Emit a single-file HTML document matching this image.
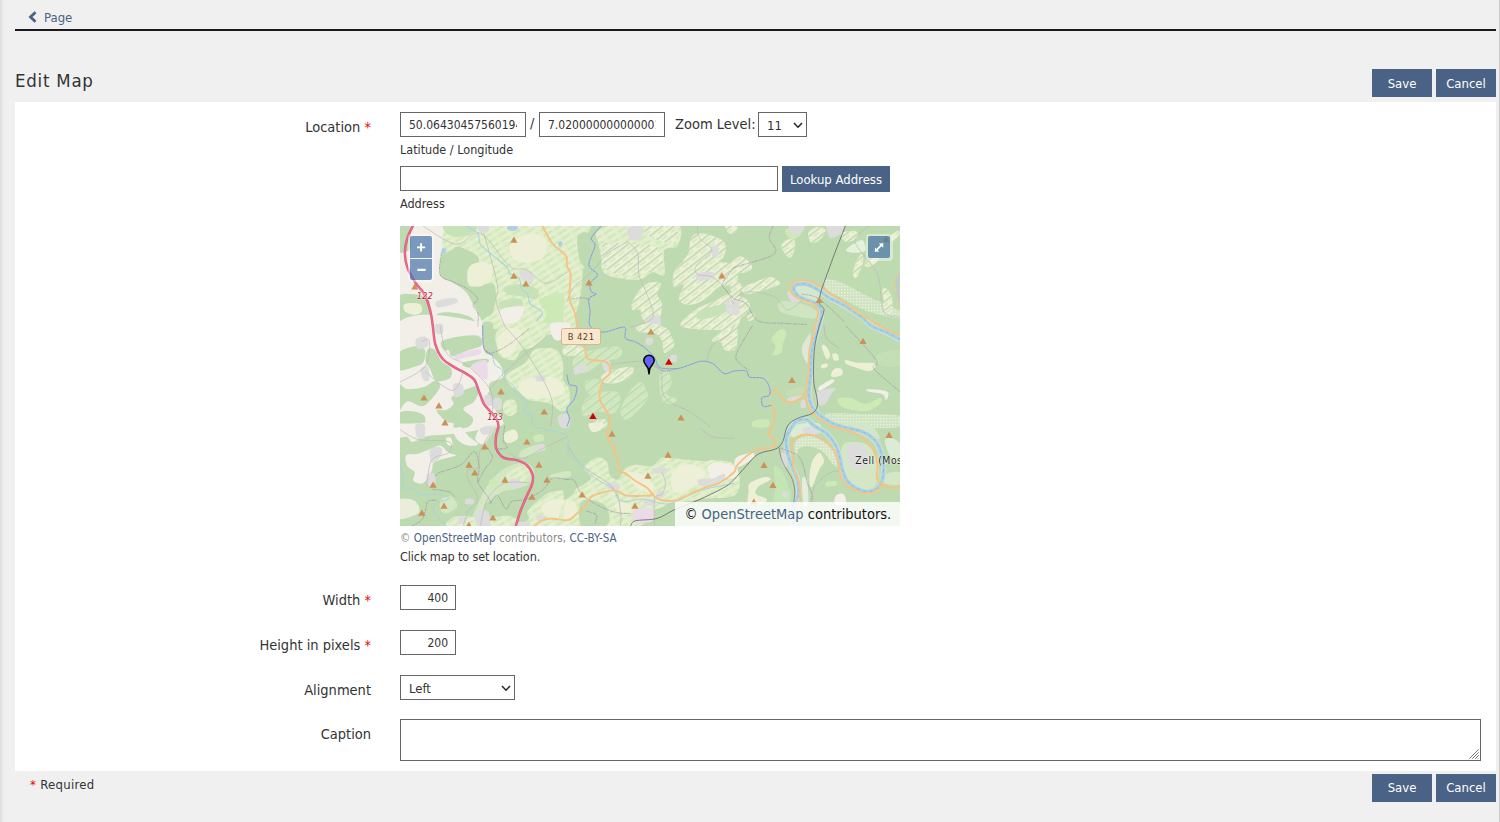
<!DOCTYPE html>
<html><head><meta charset="utf-8"><title>Edit Map</title>
<style>
*{box-sizing:border-box}
html,body{margin:0;padding:0}
body{width:1500px;height:822px;overflow:hidden;background:#f0f0f0;font-family:"DejaVu Sans Condensed","Liberation Sans",sans-serif;color:#333;position:relative;font-size:14px}
.abs{position:absolute}
.edgeL{left:0;top:0;width:4px;height:822px;background:linear-gradient(90deg,#dcdcdc,#f0f0f0)}
.edgeR{left:1499px;top:0;width:1px;height:822px;background:#cdcdcd}
.rule{left:15px;top:29px;width:1481px;height:2px;background:#1a1a1a}
.back{left:44px;top:9px;font-size:13px;color:#4a6285;line-height:18px}
.h1{left:15px;top:67px;font-size:18.5px;letter-spacing:.75px;line-height:28px;color:#333}
.panel{left:15px;top:102px;width:1481px;height:669px;background:#fff}
.btn{background:#4a6285;color:#fff;font-size:13px;text-align:center;height:28px;line-height:30px;width:60px}
.lbl{font-size:14.5px;line-height:20px;text-align:right;width:360px;left:11px;color:#333}
.red{color:#e00}
.inp{border:1px solid #666;background:#fff;height:25px;font-size:12px;line-height:23px;padding:1px 8px 0;overflow:hidden;white-space:nowrap;color:#333}
.sel{font-size:13px}
.chev{position:absolute;right:3.5px;top:9.4px}
.clip{display:block;overflow:hidden;width:108px}
.shield{background:#f9e6cf;border:1px solid #d6b88e;border-radius:2.5px;font-size:9.4px;letter-spacing:.45px;line-height:15.6px;text-align:center;color:#5a4520}
.rlab{font-size:9.3px;font-style:italic;color:#b0182e;line-height:12px;text-shadow:0 0 1.2px #fff,0 0 1.2px #fff,0 0 1.2px #fff}
.zbtn{width:22px;height:22px;background:rgba(0,60,136,.5);overflow:hidden}
.hint{font-size:12.5px;line-height:16px;color:#333}
</style></head><body>
<div class="abs edgeL"></div><div class="abs edgeR"></div>
<svg class="abs" style="left:28px;top:11px" width="10" height="12" viewBox="0 0 10 12"><path d="M7.5 1.2 L2.5 6 L7.5 10.8" fill="none" stroke="#4a6285" stroke-width="2.8"/></svg>
<div class="abs back">Page</div>
<div class="abs rule"></div>
<div class="abs h1">Edit Map</div>
<div class="abs btn" style="left:1372px;top:69px">Save</div>
<div class="abs btn" style="left:1436px;top:69px">Cancel</div>
<div class="abs panel"></div>

<div class="abs lbl" style="top:117px">Location <span class="red">*</span></div>
<div class="abs inp" style="left:400px;top:112px;width:126px"><span class="clip">50.064304575601944</span></div>
<div class="abs" style="left:530px;top:113px;font-size:14.5px;line-height:20px">/</div>
<div class="abs inp" style="left:539px;top:112px;width:126px"><span class="clip">7.020000000000001</span></div>
<div class="abs" style="left:675px;top:114px;font-size:14.5px;line-height:20px">Zoom Level:</div>
<div class="abs inp sel" style="left:758px;top:112px;width:49px">11<svg class="chev" width="10" height="7" viewBox="0 0 10 7"><path d="M1 1l4 4.200 4-4.200" fill="none" stroke="#222" stroke-width="1.500"/></svg></div>
<div class="abs hint" style="left:400px;top:142px">Latitude / Longitude</div>
<div class="abs inp" style="left:400px;top:166px;width:378px"></div>
<div class="abs btn" style="left:782px;top:166px;width:108px;height:26px;line-height:28px">Lookup Address</div>
<div class="abs hint" style="left:400px;top:196px">Address</div>

<div class="abs" id="map" style="left:400px;top:226px;width:500px;height:300px;background:#bddab1;overflow:hidden">
<svg class="abs" style="left:0;top:0" width="500" height="300" viewBox="0 0 500 300">
<rect width="500" height="300" fill="#bddab1"/>
<defs><pattern id="sF" width="11" height="7" patternUnits="userSpaceOnUse" patternTransform="rotate(-38)"><rect y="0" width="11" height="1.6" fill="#bddab1"/><rect y="3.4" width="7" height="1.1" fill="#c9e3b8"/></pattern><pattern id="sM" width="13" height="6" patternUnits="userSpaceOnUse" patternTransform="rotate(-32)"><rect y="0" width="9" height="1.7" fill="#cde9b6"/><rect x="4" y="3.2" width="9" height="1.1" fill="#eef0d5"/></pattern><pattern id="sV" width="3" height="3" patternUnits="userSpaceOnUse"><rect width="1.2" height="1.2" fill="#f2efe9"/></pattern></defs>
<path d="M41.4 -2.4 C62.4 -4.9 147.8 -19.7 169.1 -2.4 C190.4 14.8 183.5 83.7 169.1 101.0 C154.7 118.2 96.7 102.4 82.7 101.0 C68.7 99.6 83.5 94.7 85.2 92.5 C86.8 90.2 90.8 90.0 92.5 87.6 C94.1 85.2 94.3 81.1 94.9 77.9 C95.5 74.6 96.5 71.6 96.1 68.1 C95.7 64.7 95.5 58.4 92.5 57.2 C89.4 56.0 81.9 60.6 77.9 60.8 C73.8 61.0 69.7 61.4 68.1 58.4 C66.5 55.4 66.5 46.2 68.1 42.6 C69.7 38.9 76.2 38.5 77.9 36.5 C79.5 34.5 79.5 32.4 77.9 30.4 C76.2 28.4 71.6 26.0 68.1 24.3 C64.7 22.7 60.0 20.7 57.2 20.7 C54.3 20.7 53.7 23.1 51.1 24.3 C48.5 25.5 42.8 30.0 41.4 28.0 C39.9 26.0 42.6 17.2 42.6 12.2 C42.6 7.1 20.3 0.0 41.4 -2.4Z" fill="#dfedca" />
<path d="M41.4 -2.4 C62.4 -4.9 147.8 -19.7 169.1 -2.4 C190.4 14.8 183.5 83.7 169.1 101.0 C154.7 118.2 96.7 102.4 82.7 101.0 C68.7 99.6 83.5 94.7 85.2 92.5 C86.8 90.2 90.8 90.0 92.5 87.6 C94.1 85.2 94.3 81.1 94.9 77.9 C95.5 74.6 96.5 71.6 96.1 68.1 C95.7 64.7 95.5 58.4 92.5 57.2 C89.4 56.0 81.9 60.6 77.9 60.8 C73.8 61.0 69.7 61.4 68.1 58.4 C66.5 55.4 66.5 46.2 68.1 42.6 C69.7 38.9 76.2 38.5 77.9 36.5 C79.5 34.5 79.5 32.4 77.9 30.4 C76.2 28.4 71.6 26.0 68.1 24.3 C64.7 22.7 60.0 20.7 57.2 20.7 C54.3 20.7 53.7 23.1 51.1 24.3 C48.5 25.5 42.8 30.0 41.4 28.0 C39.9 26.0 42.6 17.2 42.6 12.2 C42.6 7.1 20.3 0.0 41.4 -2.4Z" fill="url(#sM)"/>
<path d="M-2.4 24.3 C-0.4 11.6 7.5 27.8 9.7 24.3 C12.0 20.9 9.9 8.1 10.9 3.6 C12.0 -0.8 10.7 -1.4 15.8 -2.4 C20.9 -3.4 36.9 -4.9 41.4 -2.4 C45.8 0.0 42.6 7.1 42.6 12.2 C42.6 17.2 41.9 23.3 41.4 28.0 C40.9 32.6 39.5 36.3 39.5 40.1 C39.5 44.0 39.0 48.3 41.4 51.1 C43.7 53.9 49.5 54.7 53.5 57.2 C57.6 59.6 62.4 62.2 65.7 65.7 C68.9 69.1 71.0 74.2 73.0 77.9 C75.0 81.5 77.5 83.7 77.9 87.6 C78.3 91.4 88.8 98.7 75.4 101.0 C62.0 103.2 10.5 113.7 -2.4 101.0 C-15.4 88.2 -4.5 37.1 -2.4 24.3Z" fill="#f2efe9" />
<path d="M-2.4 4.9 C-1.2 1.0 2.7 2.0 4.9 2.4 C7.0 2.8 9.5 3.9 10.3 7.3 C11.2 10.7 11.9 20.1 9.7 23.1 C7.6 26.2 -0.4 28.6 -2.4 25.5 C-4.5 22.5 -3.6 8.7 -2.4 4.9Z" fill="#bddab1" />
<path d="M-2.4 71.8 C0.2 66.3 8.3 67.9 13.4 68.1 C18.5 68.3 25.1 70.2 28.0 73.0 C30.8 75.8 29.2 80.5 30.4 85.2 C31.6 89.8 40.8 98.3 35.3 101.0 C29.8 103.6 3.9 105.8 -2.4 101.0 C-8.7 96.1 -5.1 77.3 -2.4 71.8Z" fill="#bddab1" />
<path d="M4.9 77.9 C7.3 76.6 16.6 76.6 19.5 77.9 C22.3 79.1 22.7 83.3 21.9 85.2 C21.1 87.0 17.4 88.8 14.6 88.8 C11.8 88.8 6.5 87.0 4.9 85.2 C3.2 83.3 2.4 79.1 4.9 77.9Z" fill="#edf0d6" />
<path d="M36.5 88.8 C38.9 86.4 45.8 86.2 51.1 86.4 C56.4 86.6 64.1 88.4 68.1 90.0 C72.2 91.6 74.2 94.3 75.4 96.1 C76.6 97.9 81.9 100.2 75.4 101.0 C68.9 101.8 43.0 103.0 36.5 101.0 C30.0 98.9 34.1 91.2 36.5 88.8Z" fill="#bddab1" />
<path d="M69.3 41.4 C70.9 37.9 75.2 37.3 77.9 36.5 C80.5 35.7 82.7 35.7 85.2 36.5 C87.6 37.3 91.6 38.5 92.5 41.4 C93.3 44.2 92.5 50.5 90.0 53.5 C87.6 56.6 81.4 59.0 77.9 59.6 C74.3 60.2 70.2 60.2 68.7 57.2 C67.3 54.1 67.8 44.8 69.3 41.4Z" fill="#edf0d6" />
<path d="M109.5 21.9 C109.9 18.2 112.7 14.6 116.8 12.2 C120.8 9.7 129.0 6.9 133.8 7.3 C138.7 7.7 144.4 10.7 146.0 14.6 C147.6 18.5 146.6 26.8 143.6 30.4 C140.5 34.1 132.6 35.9 127.7 36.5 C122.9 37.1 117.4 36.5 114.4 34.1 C111.3 31.6 109.1 25.5 109.5 21.9Z" fill="#edf0d6" />
<path d="M45.0 -2.4 C49.9 -4.1 70.8 -4.1 75.4 -2.4 C80.1 -0.8 75.8 5.1 73.0 7.3 C70.2 9.5 62.9 10.9 58.4 10.9 C53.9 10.9 48.5 9.5 46.2 7.3 C44.0 5.1 40.1 -0.8 45.0 -2.4Z" fill="#c8e2b8" />
<path d="M104.6 60.8 C107.1 59.2 116.2 58.0 121.7 58.4 C127.1 58.8 135.0 60.8 137.5 63.3 C139.9 65.7 138.9 71.8 136.3 73.0 C133.6 74.2 126.5 71.4 121.7 70.6 C116.8 69.7 109.9 69.7 107.1 68.1 C104.2 66.5 102.2 62.4 104.6 60.8Z" fill="#c8e2b8" />
<path d="M99.8 75.4 C103.0 73.6 116.8 71.8 120.4 73.0 C124.1 74.2 123.5 80.7 121.7 82.7 C119.8 84.8 112.9 85.0 109.5 85.2 C106.0 85.4 102.6 85.6 101.0 83.9 C99.4 82.3 96.5 77.3 99.8 75.4Z" fill="#c8e2b8" />
<path d="M139.9 73.0 C143.8 69.7 164.2 63.5 169.1 68.1 C174.0 72.8 173.4 95.5 169.1 101.0 C164.8 106.4 147.4 103.2 143.6 101.0 C139.7 98.7 146.6 92.3 146.0 87.6 C145.4 82.9 136.1 76.2 139.9 73.0Z" fill="#cde9b6" />
<path d="M101.0 83.9 C104.2 81.3 118.0 79.7 121.7 80.3 C125.3 80.9 124.1 84.8 122.9 87.6 C121.7 90.4 117.8 95.9 114.4 97.3 C110.9 98.7 104.4 98.3 102.2 96.1 C100.0 93.9 97.7 86.6 101.0 83.9Z" fill="#f2efe9" />
<path d="M119.2 45.0 C120.8 44.0 129.2 44.2 131.4 46.2 C133.6 48.3 133.4 55.2 132.6 57.2 C131.8 59.2 128.3 59.2 126.5 58.4 C124.7 57.6 122.9 54.5 121.7 52.3 C120.4 50.1 117.6 46.0 119.2 45.0Z" fill="#dddcdc" />
<path d="M36.5 75.4 C38.9 73.8 50.1 71.6 53.5 71.8 C57.0 72.0 59.6 75.0 57.2 76.6 C54.7 78.3 42.4 81.7 38.9 81.5 C35.5 81.3 34.1 77.0 36.5 75.4Z" fill="#dddcdc" />
<path d="M77.9 -2.4 C79.3 -3.6 86.0 -3.9 87.6 -2.4 C89.2 -1.0 89.0 4.9 87.6 6.1 C86.2 7.3 80.7 6.3 79.1 4.9 C77.5 3.4 76.4 -1.2 77.9 -2.4Z" fill="#dddcdc" />
<ellipse cx="112.5" cy="1.8" rx="5.5" ry="3.0" fill="#aad3df"/>
<ellipse cx="43.8" cy="24.9" rx="2.4" ry="3.0" fill="#aad3df"/>
<ellipse cx="160.6" cy="17.9" rx="2.4" ry="2.7" fill="#aad3df"/>
<path d="M164.6 -2.4 C168.8 -15.0 186.7 -4.9 190.1 -2.4 C193.6 0.0 187.1 7.7 185.2 12.2 C183.4 16.6 179.2 20.3 179.2 24.3 C179.2 28.4 185.0 32.4 185.2 36.5 C185.5 40.6 182.8 43.4 180.4 48.7 C177.9 53.9 173.3 64.1 170.6 68.1 C168.0 72.2 165.6 84.8 164.6 73.0 C163.6 61.2 160.3 10.1 164.6 -2.4Z" fill="#dfedca" />
<path d="M164.6 -2.4 C168.8 -15.0 186.7 -4.9 190.1 -2.4 C193.6 0.0 187.1 7.7 185.2 12.2 C183.4 16.6 179.2 20.3 179.2 24.3 C179.2 28.4 185.0 32.4 185.2 36.5 C185.5 40.6 182.8 43.4 180.4 48.7 C177.9 53.9 173.3 64.1 170.6 68.1 C168.0 72.2 165.6 84.8 164.6 73.0 C163.6 61.2 160.3 10.1 164.6 -2.4Z" fill="url(#sM)"/>
<path d="M177.9 9.7 C179.6 6.9 186.5 4.9 187.7 7.3 C188.9 9.7 185.5 18.9 185.2 24.3 C185.0 29.8 187.3 38.1 186.5 40.1 C185.7 42.2 181.8 39.1 180.4 36.5 C179.0 33.9 178.4 28.8 177.9 24.3 C177.5 19.9 176.3 12.6 177.9 9.7Z" fill="#bddab1" />
<path d="M164.6 77.9 C165.8 74.0 170.0 74.0 171.9 77.9 C173.7 81.7 176.7 97.1 175.5 101.0 C174.3 104.8 166.4 104.8 164.6 101.0 C162.7 97.1 163.4 81.7 164.6 77.9Z" fill="#dfedca" />
<path d="M164.6 77.9 C165.8 74.0 170.0 74.0 171.9 77.9 C173.7 81.7 176.7 97.1 175.5 101.0 C174.3 104.8 166.4 104.8 164.6 101.0 C162.7 97.1 163.4 81.7 164.6 77.9Z" fill="url(#sM)"/>
<path d="M197.4 4.9 C201.5 1.4 209.8 -1.2 223.0 -2.4 C236.1 -3.6 267.4 -6.1 276.5 -2.4 C285.6 1.2 279.7 15.0 277.7 19.5 C275.7 23.9 266.6 19.5 264.3 24.3 C262.1 29.2 266.4 45.0 264.3 48.7 C262.3 52.3 256.2 45.4 252.2 46.2 C248.1 47.0 245.5 52.5 240.0 53.5 C234.5 54.5 225.4 53.5 219.3 52.3 C213.2 51.1 206.5 49.9 203.5 46.2 C200.5 42.6 201.9 35.1 201.1 30.4 C200.3 25.8 199.2 22.5 198.6 18.2 C198.0 14.0 193.4 8.3 197.4 4.9Z" fill="#dfedca" />
<path d="M197.4 4.9 C201.5 1.4 209.8 -1.2 223.0 -2.4 C236.1 -3.6 267.4 -6.1 276.5 -2.4 C285.6 1.2 279.7 15.0 277.7 19.5 C275.7 23.9 266.6 19.5 264.3 24.3 C262.1 29.2 266.4 45.0 264.3 48.7 C262.3 52.3 256.2 45.4 252.2 46.2 C248.1 47.0 245.5 52.5 240.0 53.5 C234.5 54.5 225.4 53.5 219.3 52.3 C213.2 51.1 206.5 49.9 203.5 46.2 C200.5 42.6 201.9 35.1 201.1 30.4 C200.3 25.8 199.2 22.5 198.6 18.2 C198.0 14.0 193.4 8.3 197.4 4.9Z" fill="url(#sM)"/>
<path d="M203.5 18.2 C207.6 14.6 218.9 17.8 227.8 18.2 C236.7 18.7 251.3 17.0 257.0 20.7 C262.7 24.3 264.7 35.5 261.9 40.1 C259.1 44.8 247.3 47.2 240.0 48.7 C232.7 50.1 224.2 50.1 218.1 48.7 C212.0 47.2 205.9 45.2 203.5 40.1 C201.1 35.1 199.4 21.9 203.5 18.2Z" fill="#edf0d6" />
<path d="M203.5 18.2 C207.6 14.6 218.9 17.8 227.8 18.2 C236.7 18.7 251.3 17.0 257.0 20.7 C262.7 24.3 264.7 35.5 261.9 40.1 C259.1 44.8 247.3 47.2 240.0 48.7 C232.7 50.1 224.2 50.1 218.1 48.7 C212.0 47.2 205.9 45.2 203.5 40.1 C201.1 35.1 199.4 21.9 203.5 18.2Z" fill="url(#sF)"/>
<path d="M242.4 -2.4 C247.3 -4.1 268.6 -5.7 274.1 -2.4 C279.5 0.8 277.7 14.2 275.3 17.0 C272.8 19.9 264.5 16.2 259.5 14.6 C254.4 13.0 247.7 10.1 244.9 7.3 C242.0 4.5 237.6 -0.8 242.4 -2.4Z" fill="#edf0d6" />
<path d="M242.4 -2.4 C247.3 -4.1 268.6 -5.7 274.1 -2.4 C279.5 0.8 277.7 14.2 275.3 17.0 C272.8 19.9 264.5 16.2 259.5 14.6 C254.4 13.0 247.7 10.1 244.9 7.3 C242.0 4.5 237.6 -0.8 242.4 -2.4Z" fill="url(#sF)"/>
<path d="M232.7 75.4 C234.7 71.2 240.2 61.4 244.9 58.4 C249.5 55.4 258.6 55.6 260.7 57.2 C262.7 58.8 256.8 64.7 257.0 68.1 C257.2 71.6 261.5 73.8 261.9 77.9 C262.3 81.9 261.1 88.6 259.5 92.5 C257.8 96.3 255.0 101.0 252.2 101.0 C249.3 101.0 244.5 95.3 242.4 92.5 C240.4 89.6 241.6 85.4 240.0 83.9 C238.4 82.5 233.9 85.4 232.7 83.9 C231.5 82.5 230.7 79.7 232.7 75.4Z" fill="#edf0d6" />
<path d="M232.7 75.4 C234.7 71.2 240.2 61.4 244.9 58.4 C249.5 55.4 258.6 55.6 260.7 57.2 C262.7 58.8 256.8 64.7 257.0 68.1 C257.2 71.6 261.5 73.8 261.9 77.9 C262.3 81.9 261.1 88.6 259.5 92.5 C257.8 96.3 255.0 101.0 252.2 101.0 C249.3 101.0 244.5 95.3 242.4 92.5 C240.4 89.6 241.6 85.4 240.0 83.9 C238.4 82.5 233.9 85.4 232.7 83.9 C231.5 82.5 230.7 79.7 232.7 75.4Z" fill="url(#sF)"/>
<path d="M288.7 26.8 C289.9 22.7 289.1 15.4 291.1 12.2 C293.1 8.9 295.5 6.9 300.8 7.3 C306.1 7.7 318.7 11.4 322.7 14.6 C326.8 17.8 326.0 23.1 325.2 26.8 C324.3 30.4 321.9 34.3 317.9 36.5 C313.8 38.7 306.5 40.1 300.8 40.1 C295.1 40.1 285.8 38.7 283.8 36.5 C281.8 34.3 287.4 30.8 288.7 26.8Z" fill="#edf0d6" />
<path d="M288.7 26.8 C289.9 22.7 289.1 15.4 291.1 12.2 C293.1 8.9 295.5 6.9 300.8 7.3 C306.1 7.7 318.7 11.4 322.7 14.6 C326.8 17.8 326.0 23.1 325.2 26.8 C324.3 30.4 321.9 34.3 317.9 36.5 C313.8 38.7 306.5 40.1 300.8 40.1 C295.1 40.1 285.8 38.7 283.8 36.5 C281.8 34.3 287.4 30.8 288.7 26.8Z" fill="url(#sF)"/>
<path d="M274.1 46.2 C275.7 42.2 279.3 37.5 283.8 36.5 C288.2 35.5 294.9 40.1 300.8 40.1 C306.7 40.1 313.2 36.5 319.1 36.5 C324.9 36.5 333.3 36.7 336.1 40.1 C338.9 43.6 338.9 53.7 336.1 57.2 C333.3 60.6 324.1 58.2 319.1 60.8 C314.0 63.5 310.8 70.0 305.7 73.0 C300.6 76.0 293.1 79.1 288.7 79.1 C284.2 79.1 279.7 76.4 278.9 73.0 C278.1 69.5 284.6 60.4 283.8 58.4 C283.0 56.4 275.7 62.9 274.1 60.8 C272.4 58.8 272.4 50.3 274.1 46.2Z" fill="#edf0d6" />
<path d="M274.1 46.2 C275.7 42.2 279.3 37.5 283.8 36.5 C288.2 35.5 294.9 40.1 300.8 40.1 C306.7 40.1 313.2 36.5 319.1 36.5 C324.9 36.5 333.3 36.7 336.1 40.1 C338.9 43.6 338.9 53.7 336.1 57.2 C333.3 60.6 324.1 58.2 319.1 60.8 C314.0 63.5 310.8 70.0 305.7 73.0 C300.6 76.0 293.1 79.1 288.7 79.1 C284.2 79.1 279.7 76.4 278.9 73.0 C278.1 69.5 284.6 60.4 283.8 58.4 C283.0 56.4 275.7 62.9 274.1 60.8 C272.4 58.8 272.4 50.3 274.1 46.2Z" fill="url(#sF)"/>
<path d="M282.6 101.0 C275.5 98.3 288.5 89.4 293.5 85.2 C298.6 80.9 305.9 78.3 313.0 75.4 C320.1 72.6 332.2 63.9 336.1 68.1 C340.0 72.4 345.0 95.5 336.1 101.0 C327.2 106.4 289.7 103.6 282.6 101.0Z" fill="#edf0d6" />
<path d="M282.6 101.0 C275.5 98.3 288.5 89.4 293.5 85.2 C298.6 80.9 305.9 78.3 313.0 75.4 C320.1 72.6 332.2 63.9 336.1 68.1 C340.0 72.4 345.0 95.5 336.1 101.0 C327.2 106.4 289.7 103.6 282.6 101.0Z" fill="url(#sF)"/>
<path d="M298.4 85.2 C302.4 82.5 320.3 77.9 325.2 77.9 C330.0 77.9 331.6 82.5 327.6 85.2 C323.5 87.8 305.7 93.7 300.8 93.7 C296.0 93.7 294.3 87.8 298.4 85.2Z" fill="#c8e2b8" />
<path d="M325.2 -2.4 C326.4 -4.1 334.3 -3.9 336.1 -2.4 C337.9 -1.0 337.3 4.5 336.1 6.1 C334.9 7.7 330.6 8.7 328.8 7.3 C327.0 5.9 323.9 -0.8 325.2 -2.4Z" fill="#edf0d6" />
<path d="M325.2 -2.4 C326.4 -4.1 334.3 -3.9 336.1 -2.4 C337.9 -1.0 337.3 4.5 336.1 6.1 C334.9 7.7 330.6 8.7 328.8 7.3 C327.0 5.9 323.9 -0.8 325.2 -2.4Z" fill="url(#sF)"/>
<path d="M227.8 2.4 C229.9 0.4 240.2 -0.4 242.4 1.2 C244.7 2.8 243.2 10.1 241.2 12.2 C239.2 14.2 232.5 15.0 230.3 13.4 C228.0 11.8 225.8 4.5 227.8 2.4Z" fill="#dddcdc" />
<path d="M297.2 47.4 C299.6 46.0 310.3 45.4 313.0 46.2 C315.6 47.0 315.4 50.9 313.0 52.3 C310.6 53.7 301.0 55.6 298.4 54.7 C295.8 53.9 294.7 48.9 297.2 47.4Z" fill="#dddcdc" />
<path d="M311.8 20.7 C312.7 19.1 316.8 19.1 317.9 20.7 C318.9 22.3 318.8 28.8 317.9 30.4 C316.9 32.0 313.4 32.0 312.4 30.4 C311.4 28.8 310.9 22.3 311.8 20.7Z" fill="#dddcdc" />
<path d="M247.3 92.5 C249.3 90.6 257.4 88.6 259.5 90.0 C261.5 91.4 261.5 99.1 259.5 101.0 C257.4 102.8 249.3 102.4 247.3 101.0 C245.3 99.6 245.3 94.3 247.3 92.5Z" fill="#dddcdc" />
<path d="M326.4 75.4 C327.8 73.4 334.5 73.4 336.1 75.4 C337.7 77.5 337.5 85.6 336.1 87.6 C334.7 89.6 329.2 89.6 327.6 87.6 C326.0 85.6 324.9 77.5 326.4 75.4Z" fill="#dddcdc" />
<path d="M425.2 53.5 C428.1 52.5 434.4 53.5 443.5 57.2 C452.6 60.8 470.6 70.8 480.0 75.4 C489.4 80.1 496.6 82.3 499.9 85.2 C503.3 88.0 505.3 92.5 499.9 92.5 C494.6 92.5 477.2 88.4 467.8 85.2 C458.4 81.9 450.4 76.6 443.5 73.0 C436.6 69.3 429.5 66.5 426.5 63.3 C423.4 60.0 422.4 54.5 425.2 53.5Z" fill="#cfe5c2" />
<path d="M425.2 53.5 C428.1 52.5 434.4 53.5 443.5 57.2 C452.6 60.8 470.6 70.8 480.0 75.4 C489.4 80.1 496.6 82.3 499.9 85.2 C503.3 88.0 505.3 92.5 499.9 92.5 C494.6 92.5 477.2 88.4 467.8 85.2 C458.4 81.9 450.4 76.6 443.5 73.0 C436.6 69.3 429.5 66.5 426.5 63.3 C423.4 60.0 422.4 54.5 425.2 53.5Z" fill="url(#sV)"/>
<path d="M428.9 36.5 C433.4 33.3 445.7 31.0 453.2 31.6 C460.7 32.2 468.8 34.9 473.9 40.1 C479.0 45.4 482.6 57.4 483.6 63.3 C484.6 69.1 486.7 76.4 480.0 75.4 C473.3 74.4 452.4 61.2 443.5 57.2 C434.6 53.1 428.9 54.5 426.5 51.1 C424.0 47.6 424.4 39.7 428.9 36.5Z" fill="#bfdcb0" />
<path d="M380.2 75.4 C383.9 74.2 396.0 76.2 402.1 77.9 C408.2 79.5 414.7 82.7 416.7 85.2 C418.8 87.6 417.9 91.6 414.3 92.5 C410.6 93.3 400.5 91.2 394.8 90.0 C389.2 88.8 382.7 87.6 380.2 85.2 C377.8 82.7 376.6 76.6 380.2 75.4Z" fill="#cfe5c2" />
<path d="M393.6 57.2 C396.0 55.6 402.7 54.9 407.0 56.0 C411.3 57.0 417.5 60.2 419.2 63.3 C420.8 66.3 419.6 72.8 416.7 74.2 C413.9 75.6 406.2 73.2 402.1 71.8 C398.1 70.4 393.8 68.1 392.4 65.7 C391.0 63.3 391.2 58.8 393.6 57.2Z" fill="#d5e8cc" />
<path d="M381.4 20.7 C381.2 17.6 385.3 14.4 387.5 13.4 C389.8 12.4 393.8 12.4 394.8 14.6 C395.8 16.8 394.6 23.9 393.6 26.8 C392.6 29.6 390.8 32.6 388.7 31.6 C386.7 30.6 381.6 23.7 381.4 20.7Z" fill="#edf0d6" />
<path d="M381.4 20.7 C381.2 17.6 385.3 14.4 387.5 13.4 C389.8 12.4 393.8 12.4 394.8 14.6 C395.8 16.8 394.6 23.9 393.6 26.8 C392.6 29.6 390.8 32.6 388.7 31.6 C386.7 30.6 381.6 23.7 381.4 20.7Z" fill="url(#sF)"/>
<path d="M385.1 4.9 C385.3 2.8 389.6 1.6 392.4 1.2 C395.2 0.8 400.9 1.0 402.1 2.4 C403.3 3.9 401.5 7.9 399.7 9.7 C397.9 11.6 393.6 14.2 391.2 13.4 C388.7 12.6 384.9 6.9 385.1 4.9Z" fill="#cde9b6" />
<path d="M390.0 -1.2 C392.0 -2.8 401.3 -2.4 403.3 -1.2 C405.4 0.0 404.2 4.5 402.1 6.1 C400.1 7.7 393.2 9.7 391.2 8.5 C389.2 7.3 387.9 0.4 390.0 -1.2Z" fill="#dddcdc" />
<path d="M408.2 7.3 C409.0 4.7 413.9 1.8 416.7 1.2 C419.6 0.6 424.4 1.8 425.2 3.6 C426.1 5.5 423.8 9.9 421.6 12.2 C419.4 14.4 414.1 17.8 411.9 17.0 C409.6 16.2 407.4 9.9 408.2 7.3Z" fill="#edf0d6" />
<path d="M408.2 7.3 C409.0 4.7 413.9 1.8 416.7 1.2 C419.6 0.6 424.4 1.8 425.2 3.6 C426.1 5.5 423.8 9.9 421.6 12.2 C419.4 14.4 414.1 17.8 411.9 17.0 C409.6 16.2 407.4 9.9 408.2 7.3Z" fill="url(#sF)"/>
<path d="M427.7 -2.4 C430.3 -4.1 441.3 -4.1 443.5 -2.4 C445.7 -0.8 443.1 4.9 441.1 7.3 C439.0 9.7 433.6 12.2 431.3 12.2 C429.1 12.2 428.3 9.7 427.7 7.3 C427.1 4.9 425.0 -0.8 427.7 -2.4Z" fill="#dddcdc" />
<path d="M441.1 7.3 C442.7 5.5 453.0 4.1 455.7 4.9 C458.3 5.7 458.5 10.3 456.9 12.2 C455.2 14.0 448.6 16.6 445.9 15.8 C443.3 15.0 439.4 9.1 441.1 7.3Z" fill="#edf0d6" />
<path d="M441.1 7.3 C442.7 5.5 453.0 4.1 455.7 4.9 C458.3 5.7 458.5 10.3 456.9 12.2 C455.2 14.0 448.6 16.6 445.9 15.8 C443.3 15.0 439.4 9.1 441.1 7.3Z" fill="url(#sF)"/>
<path d="M445.9 24.3 C446.1 22.5 454.0 17.4 456.9 15.8 C459.7 14.2 461.5 13.2 463.0 14.6 C464.4 16.0 466.6 22.3 465.4 24.3 C464.2 26.4 458.9 26.8 455.7 26.8 C452.4 26.8 445.7 26.2 445.9 24.3Z" fill="#e4f2dc" />
<path d="M455.7 36.5 C457.1 33.0 460.5 28.0 461.7 28.0 C463.0 28.0 463.8 32.6 463.0 36.5 C462.1 40.3 458.5 49.1 456.9 51.1 C455.2 53.1 453.4 51.1 453.2 48.7 C453.0 46.2 454.2 39.9 455.7 36.5Z" fill="#edf0d6" />
<path d="M455.7 36.5 C457.1 33.0 460.5 28.0 461.7 28.0 C463.0 28.0 463.8 32.6 463.0 36.5 C462.1 40.3 458.5 49.1 456.9 51.1 C455.2 53.1 453.4 51.1 453.2 48.7 C453.0 46.2 454.2 39.9 455.7 36.5Z" fill="url(#sF)"/>
<path d="M465.4 35.3 C467.2 33.7 475.7 31.4 477.6 31.6 C479.4 31.8 478.2 34.9 476.3 36.5 C474.5 38.1 468.4 41.6 466.6 41.4 C464.8 41.2 463.6 36.9 465.4 35.3Z" fill="#edf0d6" />
<path d="M465.4 35.3 C467.2 33.7 475.7 31.4 477.6 31.6 C479.4 31.8 478.2 34.9 476.3 36.5 C474.5 38.1 468.4 41.6 466.6 41.4 C464.8 41.2 463.6 36.9 465.4 35.3Z" fill="url(#sF)"/>
<path d="M490.9 9.7 C491.5 7.9 495.5 5.3 497.0 4.9 C498.5 4.5 500.5 5.5 499.9 7.3 C499.3 9.1 494.9 15.4 493.4 15.8 C491.9 16.2 490.3 11.6 490.9 9.7Z" fill="#edf0d6" />
<path d="M490.9 9.7 C491.5 7.9 495.5 5.3 497.0 4.9 C498.5 4.5 500.5 5.5 499.9 7.3 C499.3 9.1 494.9 15.4 493.4 15.8 C491.9 16.2 490.3 11.6 490.9 9.7Z" fill="url(#sF)"/>
<path d="M482.4 63.3 C483.0 61.6 485.7 61.6 487.3 63.3 C488.9 64.9 491.5 68.9 492.2 73.0 C492.8 77.0 492.2 85.6 490.9 87.6 C489.7 89.6 486.1 87.6 484.9 85.2 C483.6 82.7 484.0 76.6 483.6 73.0 C483.2 69.3 481.8 64.9 482.4 63.3Z" fill="#edf0d6" />
<path d="M482.4 63.3 C483.0 61.6 485.7 61.6 487.3 63.3 C488.9 64.9 491.5 68.9 492.2 73.0 C492.8 77.0 492.2 85.6 490.9 87.6 C489.7 89.6 486.1 87.6 484.9 85.2 C483.6 82.7 484.0 76.6 483.6 73.0 C483.2 69.3 481.8 64.9 482.4 63.3Z" fill="url(#sF)"/>
<path d="M331.6 36.5 C333.2 33.9 337.9 29.8 341.3 30.4 C344.7 31.0 351.4 37.5 352.2 40.1 C353.1 42.8 349.6 45.2 346.2 46.2 C342.7 47.2 334.0 47.9 331.6 46.2 C329.1 44.6 329.9 39.1 331.6 36.5Z" fill="#edf0d6" />
<path d="M331.6 36.5 C333.2 33.9 337.9 29.8 341.3 30.4 C344.7 31.0 351.4 37.5 352.2 40.1 C353.1 42.8 349.6 45.2 346.2 46.2 C342.7 47.2 334.0 47.9 331.6 46.2 C329.1 44.6 329.9 39.1 331.6 36.5Z" fill="url(#sF)"/>
<path d="M331.6 56.0 C333.2 54.3 340.1 56.4 341.3 58.4 C342.5 60.4 340.5 66.5 338.9 68.1 C337.2 69.7 332.8 70.2 331.6 68.1 C330.4 66.1 329.9 57.6 331.6 56.0Z" fill="#edf0d6" />
<path d="M331.6 56.0 C333.2 54.3 340.1 56.4 341.3 58.4 C342.5 60.4 340.5 66.5 338.9 68.1 C337.2 69.7 332.8 70.2 331.6 68.1 C330.4 66.1 329.9 57.6 331.6 56.0Z" fill="url(#sF)"/>
<path d="M341.3 62.0 C342.3 60.2 349.4 58.4 352.2 57.2 C355.1 56.0 355.3 55.8 358.3 54.7 C361.4 53.7 366.8 50.7 370.5 51.1 C374.1 51.5 380.2 55.4 380.2 57.2 C380.2 59.0 374.1 60.6 370.5 62.0 C366.8 63.5 362.4 64.7 358.3 65.7 C354.3 66.7 349.0 68.7 346.2 68.1 C343.3 67.5 340.3 63.9 341.3 62.0Z" fill="#edf0d6" />
<path d="M341.3 62.0 C342.3 60.2 349.4 58.4 352.2 57.2 C355.1 56.0 355.3 55.8 358.3 54.7 C361.4 53.7 366.8 50.7 370.5 51.1 C374.1 51.5 380.2 55.4 380.2 57.2 C380.2 59.0 374.1 60.6 370.5 62.0 C366.8 63.5 362.4 64.7 358.3 65.7 C354.3 66.7 349.0 68.7 346.2 68.1 C343.3 67.5 340.3 63.9 341.3 62.0Z" fill="url(#sF)"/>
<path d="M331.6 70.6 C333.6 67.5 340.7 70.4 343.7 71.8 C346.8 73.2 349.8 76.0 349.8 79.1 C349.8 82.1 346.8 88.2 343.7 90.0 C340.7 91.8 333.6 93.3 331.6 90.0 C329.5 86.8 329.5 73.6 331.6 70.6Z" fill="#edf0d6" />
<path d="M331.6 70.6 C333.6 67.5 340.7 70.4 343.7 71.8 C346.8 73.2 349.8 76.0 349.8 79.1 C349.8 82.1 346.8 88.2 343.7 90.0 C340.7 91.8 333.6 93.3 331.6 90.0 C329.5 86.8 329.5 73.6 331.6 70.6Z" fill="url(#sF)"/>
<path d="M331.6 75.4 C332.8 73.4 337.6 73.4 338.9 75.4 C340.1 77.5 340.1 85.6 338.9 87.6 C337.6 89.6 332.8 89.6 331.6 87.6 C330.4 85.6 330.4 77.5 331.6 75.4Z" fill="#dddcdc" />
<path d="M347.4 90.0 C348.2 88.8 352.2 87.2 353.5 87.6 C354.7 88.0 355.5 91.2 354.7 92.5 C353.9 93.7 349.8 95.3 348.6 94.9 C347.4 94.5 346.6 91.2 347.4 90.0Z" fill="#edf0d6" />
<path d="M347.4 90.0 C348.2 88.8 352.2 87.2 353.5 87.6 C354.7 88.0 355.5 91.2 354.7 92.5 C353.9 93.7 349.8 95.3 348.6 94.9 C347.4 94.5 346.6 91.2 347.4 90.0Z" fill="url(#sF)"/>
<path d="M387.5 65.7 C388.5 64.5 395.2 66.5 397.3 68.1 C399.3 69.7 400.7 74.2 399.7 75.4 C398.7 76.6 393.2 77.0 391.2 75.4 C389.2 73.8 386.5 66.9 387.5 65.7Z" fill="#dddcdc" />
<path d="M96.1 107.3 C98.1 103.2 101.2 99.2 109.5 97.6 C117.8 95.9 139.9 95.5 146.0 97.6 C152.1 99.6 148.0 105.9 146.0 109.7 C144.0 113.6 137.9 118.2 133.8 120.7 C129.8 123.1 124.9 122.1 121.7 124.3 C118.4 126.6 117.8 133.0 114.4 134.1 C110.9 135.1 103.8 132.4 101.0 130.4 C98.1 128.4 98.1 125.8 97.3 121.9 C96.5 118.0 94.1 111.4 96.1 107.3Z" fill="#dfedca" />
<path d="M96.1 107.3 C98.1 103.2 101.2 99.2 109.5 97.6 C117.8 95.9 139.9 95.5 146.0 97.6 C152.1 99.6 148.0 105.9 146.0 109.7 C144.0 113.6 137.9 118.2 133.8 120.7 C129.8 123.1 124.9 122.1 121.7 124.3 C118.4 126.6 117.8 133.0 114.4 134.1 C110.9 135.1 103.8 132.4 101.0 130.4 C98.1 128.4 98.1 125.8 97.3 121.9 C96.5 118.0 94.1 111.4 96.1 107.3Z" fill="url(#sM)"/>
<path d="M107.1 148.7 C109.7 145.0 120.8 140.6 125.3 136.5 C129.8 132.4 130.4 126.8 133.8 124.3 C137.3 121.9 142.1 121.9 146.0 121.9 C149.8 121.9 154.1 121.9 156.9 124.3 C159.8 126.8 162.0 131.6 163.0 136.5 C164.0 141.4 162.0 149.1 163.0 153.5 C164.0 158.0 168.1 159.2 169.1 163.3 C170.1 167.3 170.3 174.2 169.1 177.9 C167.9 181.5 164.8 185.2 161.8 185.2 C158.8 185.2 154.7 179.5 150.9 177.9 C147.0 176.2 142.7 176.2 138.7 175.4 C134.6 174.6 129.8 174.6 126.5 173.0 C123.3 171.4 122.1 168.1 119.2 165.7 C116.4 163.3 111.5 161.2 109.5 158.4 C107.5 155.6 104.4 152.3 107.1 148.7Z" fill="#dfedca" />
<path d="M107.1 148.7 C109.7 145.0 120.8 140.6 125.3 136.5 C129.8 132.4 130.4 126.8 133.8 124.3 C137.3 121.9 142.1 121.9 146.0 121.9 C149.8 121.9 154.1 121.9 156.9 124.3 C159.8 126.8 162.0 131.6 163.0 136.5 C164.0 141.4 162.0 149.1 163.0 153.5 C164.0 158.0 168.1 159.2 169.1 163.3 C170.1 167.3 170.3 174.2 169.1 177.9 C167.9 181.5 164.8 185.2 161.8 185.2 C158.8 185.2 154.7 179.5 150.9 177.9 C147.0 176.2 142.7 176.2 138.7 175.4 C134.6 174.6 129.8 174.6 126.5 173.0 C123.3 171.4 122.1 168.1 119.2 165.7 C116.4 163.3 111.5 161.2 109.5 158.4 C107.5 155.6 104.4 152.3 107.1 148.7Z" fill="url(#sM)"/>
<path d="M119.2 158.4 C121.2 155.6 127.3 151.9 133.8 151.1 C140.3 150.3 153.3 150.7 158.2 153.5 C163.0 156.4 167.1 164.9 163.0 168.1 C159.0 171.4 140.7 173.0 133.8 173.0 C126.9 173.0 124.1 170.6 121.7 168.1 C119.2 165.7 117.2 161.2 119.2 158.4Z" fill="#edf0d6" />
<path d="M97.3 112.2 C98.7 107.9 105.4 103.6 109.5 102.4 C113.5 101.2 120.4 102.2 121.7 104.9 C122.9 107.5 118.8 114.0 116.8 118.2 C114.8 122.5 112.1 128.8 109.5 130.4 C106.9 132.0 103.0 131.0 101.0 128.0 C98.9 124.9 95.9 116.4 97.3 112.2Z" fill="#edf0d6" />
<path d="M104.6 175.4 C106.4 173.6 112.3 172.6 114.4 174.2 C116.4 175.8 117.6 182.5 116.8 185.2 C116.0 187.8 111.7 190.0 109.5 190.0 C107.3 190.0 104.2 187.6 103.4 185.2 C102.6 182.7 102.8 177.3 104.6 175.4Z" fill="#dfedca" />
<path d="M104.6 175.4 C106.4 173.6 112.3 172.6 114.4 174.2 C116.4 175.8 117.6 182.5 116.8 185.2 C116.0 187.8 111.7 190.0 109.5 190.0 C107.3 190.0 104.2 187.6 103.4 185.2 C102.6 182.7 102.8 177.3 104.6 175.4Z" fill="url(#sM)"/>
<path d="M-2.4 97.6 C11.8 80.3 68.3 93.1 82.7 97.6 C97.1 102.0 82.3 118.9 83.9 124.3 C85.6 129.8 89.6 127.8 92.5 130.4 C95.3 133.0 99.1 136.7 101.0 140.1 C102.8 143.6 105.2 148.3 103.4 151.1 C101.6 153.9 92.3 154.3 90.0 157.2 C87.8 160.0 89.0 163.5 90.0 168.1 C91.0 172.8 95.1 179.7 96.1 185.2 C97.1 190.6 112.5 198.3 96.1 201.0 C79.7 203.6 14.0 218.2 -2.4 201.0 C-18.9 183.7 -16.6 114.8 -2.4 97.6Z" fill="#f2efe9" />
<path d="M41.4 115.8 C43.4 113.6 49.9 112.0 56.0 110.9 C62.0 109.9 73.6 108.3 77.9 109.7 C82.1 111.2 83.1 117.0 81.5 119.5 C79.9 121.9 73.0 122.5 68.1 124.3 C63.3 126.2 55.6 130.4 52.3 130.4 C49.1 130.4 50.1 125.3 48.7 124.3 C47.2 123.3 45.0 125.8 43.8 124.3 C42.6 122.9 39.3 118.0 41.4 115.8Z" fill="#bddab1" />
<path d="M-2.4 128.0 C0.0 124.1 7.7 121.5 12.2 120.7 C16.6 119.9 22.5 120.5 24.3 123.1 C26.2 125.8 25.1 133.5 23.1 136.5 C21.1 139.5 16.4 140.1 12.2 141.4 C7.9 142.6 0.0 146.0 -2.4 143.8 C-4.9 141.6 -4.9 131.8 -2.4 128.0Z" fill="#bddab1" />
<path d="M28.0 123.1 C29.6 121.5 33.0 122.3 35.3 124.3 C37.5 126.4 38.7 132.2 41.4 135.3 C44.0 138.3 49.7 139.7 51.1 142.6 C52.5 145.4 52.3 150.3 49.9 152.3 C47.4 154.3 39.7 156.2 36.5 154.7 C33.3 153.3 32.2 147.2 30.4 143.8 C28.6 140.3 26.0 137.5 25.5 134.1 C25.1 130.6 26.4 124.7 28.0 123.1Z" fill="#bddab1" />
<path d="M63.3 136.5 C66.1 135.1 81.1 132.8 85.2 132.8 C89.2 132.8 90.4 135.1 87.6 136.5 C84.8 137.9 72.2 141.4 68.1 141.4 C64.1 141.4 60.4 137.9 63.3 136.5Z" fill="#bddab1" />
<path d="M-2.4 158.4 C-0.8 154.7 2.8 162.9 7.3 163.3 C11.8 163.7 19.7 162.2 24.3 160.8 C29.0 159.4 32.6 154.7 35.3 154.7 C37.9 154.7 40.8 157.8 40.1 160.8 C39.5 163.9 34.7 169.7 31.6 173.0 C28.6 176.2 26.0 179.9 21.9 180.3 C17.8 180.7 11.4 174.6 7.3 175.4 C3.2 176.2 -0.8 188.0 -2.4 185.2 C-4.1 182.3 -4.1 162.0 -2.4 158.4Z" fill="#bddab1" />
<path d="M-2.4 187.6 C0.0 185.0 7.7 184.8 12.2 185.2 C16.6 185.6 22.7 187.4 24.3 190.0 C26.0 192.7 26.4 199.1 21.9 201.0 C17.4 202.8 1.6 203.2 -2.4 201.0 C-6.5 198.7 -4.9 190.2 -2.4 187.6Z" fill="#bddab1" />
<path d="M52.3 170.6 C55.6 167.7 68.5 162.0 73.0 160.8 C77.5 159.6 78.9 160.8 79.1 163.3 C79.3 165.7 76.8 172.2 74.2 175.4 C71.6 178.7 63.5 179.9 63.3 182.7 C63.1 185.6 72.2 189.4 73.0 192.5 C73.8 195.5 71.4 199.6 68.1 201.0 C64.9 202.4 58.8 203.6 53.5 201.0 C48.3 198.3 37.7 188.0 36.5 185.2 C35.3 182.3 43.4 185.2 46.2 183.9 C49.1 182.7 52.5 180.1 53.5 177.9 C54.5 175.6 49.1 173.4 52.3 170.6Z" fill="#bddab1" />
<path d="M87.6 168.1 C87.4 166.5 91.8 164.9 94.9 163.3 C97.9 161.6 104.2 157.6 105.8 158.4 C107.5 159.2 106.2 165.7 104.6 168.1 C103.0 170.6 98.9 173.0 96.1 173.0 C93.3 173.0 87.8 169.7 87.6 168.1Z" fill="#bddab1" />
<path d="M82.7 97.6 C84.3 95.1 90.8 94.7 92.5 97.6 C94.1 100.4 93.7 110.1 92.5 114.6 C91.2 119.1 86.8 124.7 85.2 124.3 C83.5 123.9 83.1 116.6 82.7 112.2 C82.3 107.7 81.1 100.0 82.7 97.6Z" fill="#bddab1" />
<path d="M56.0 129.2 C59.4 127.4 73.8 123.3 77.9 123.1 C81.9 122.9 82.3 126.6 80.3 128.0 C78.3 129.4 69.5 130.6 65.7 131.6 C61.8 132.6 58.8 134.5 57.2 134.1 C55.6 133.7 52.5 131.0 56.0 129.2Z" fill="#ebdbe8" />
<path d="M71.8 138.9 C73.4 136.9 82.5 133.3 85.2 134.1 C87.8 134.9 87.4 140.6 87.6 143.8 C87.8 147.0 88.4 153.1 86.4 153.5 C84.3 153.9 77.9 148.7 75.4 146.2 C73.0 143.8 70.2 141.0 71.8 138.9Z" fill="#ebdbe8" />
<path d="M15.8 113.4 C17.0 111.4 23.5 109.9 25.5 110.9 C27.6 112.0 29.2 117.4 28.0 119.5 C26.8 121.5 20.3 124.1 18.2 123.1 C16.2 122.1 14.6 115.4 15.8 113.4Z" fill="#dddcdc" />
<path d="M20.7 142.6 C21.5 140.6 26.6 139.5 28.0 141.4 C29.4 143.2 30.0 151.5 29.2 153.5 C28.4 155.6 24.5 155.4 23.1 153.5 C21.7 151.7 19.9 144.6 20.7 142.6Z" fill="#dddcdc" />
<path d="M53.5 158.4 C54.7 156.4 60.4 156.8 62.0 158.4 C63.7 160.0 64.5 166.1 63.3 168.1 C62.0 170.2 56.4 172.2 54.7 170.6 C53.1 168.9 52.3 160.4 53.5 158.4Z" fill="#dddcdc" />
<path d="M83.9 170.6 C84.8 168.9 88.6 167.9 90.0 169.3 C91.4 170.8 93.3 177.5 92.5 179.1 C91.6 180.7 86.6 180.5 85.2 179.1 C83.7 177.7 83.1 172.2 83.9 170.6Z" fill="#dddcdc" />
<path d="M93.7 173.0 C94.9 171.4 99.8 171.4 101.0 173.0 C102.2 174.6 102.2 181.1 101.0 182.7 C99.8 184.3 94.9 184.3 93.7 182.7 C92.5 181.1 92.5 174.6 93.7 173.0Z" fill="#dddcdc" />
<path d="M35.3 98.8 C36.3 97.4 41.4 97.4 42.6 98.8 C43.8 100.2 43.6 105.9 42.6 107.3 C41.6 108.7 37.7 108.7 36.5 107.3 C35.3 105.9 34.3 100.2 35.3 98.8Z" fill="#dddcdc" />
<path d="M150.9 97.6 C153.7 95.5 166.1 95.9 169.1 97.6 C172.1 99.2 170.9 104.5 169.1 107.3 C167.3 110.1 161.0 114.2 158.2 114.6 C155.3 115.0 153.3 112.6 152.1 109.7 C150.9 106.9 148.0 99.6 150.9 97.6Z" fill="#f2efe9" />
<path d="M158.2 190.0 C159.6 188.0 167.3 187.0 169.1 188.8 C170.9 190.6 170.5 198.9 169.1 201.0 C167.7 203.0 162.4 202.8 160.6 201.0 C158.8 199.1 156.7 192.1 158.2 190.0Z" fill="#dddcdc" />
<path d="M136.3 149.9 C137.7 149.1 143.3 149.1 144.8 149.9 C146.2 150.7 146.2 153.9 144.8 154.7 C143.3 155.6 137.7 155.6 136.3 154.7 C134.8 153.9 134.8 150.7 136.3 149.9Z" fill="#dddcdc" />
<path d="M236.3 100.0 C238.2 98.6 245.9 97.2 250.9 97.6 C256.0 98.0 263.3 100.2 266.8 102.4 C270.2 104.7 270.4 108.1 271.6 110.9 C272.8 113.8 275.3 116.8 274.1 119.5 C272.8 122.1 266.4 127.6 264.3 126.8 C262.3 126.0 263.5 117.8 261.9 114.6 C260.3 111.4 258.2 108.7 254.6 107.3 C250.9 105.9 243.0 107.3 240.0 106.1 C237.0 104.9 234.5 101.4 236.3 100.0Z" fill="#edf0d6" />
<path d="M236.3 100.0 C238.2 98.6 245.9 97.2 250.9 97.6 C256.0 98.0 263.3 100.2 266.8 102.4 C270.2 104.7 270.4 108.1 271.6 110.9 C272.8 113.8 275.3 116.8 274.1 119.5 C272.8 122.1 266.4 127.6 264.3 126.8 C262.3 126.0 263.5 117.8 261.9 114.6 C260.3 111.4 258.2 108.7 254.6 107.3 C250.9 105.9 243.0 107.3 240.0 106.1 C237.0 104.9 234.5 101.4 236.3 100.0Z" fill="url(#sF)"/>
<path d="M311.8 114.6 C312.4 112.4 319.9 105.1 323.9 102.4 C328.0 99.8 334.1 95.5 336.1 98.8 C338.1 102.0 337.9 117.6 336.1 121.9 C334.3 126.2 327.8 125.3 325.2 124.3 C322.5 123.3 322.5 117.4 320.3 115.8 C318.1 114.2 311.2 116.8 311.8 114.6Z" fill="#edf0d6" />
<path d="M311.8 114.6 C312.4 112.4 319.9 105.1 323.9 102.4 C328.0 99.8 334.1 95.5 336.1 98.8 C338.1 102.0 337.9 117.6 336.1 121.9 C334.3 126.2 327.8 125.3 325.2 124.3 C322.5 123.3 322.5 117.4 320.3 115.8 C318.1 114.2 311.2 116.8 311.8 114.6Z" fill="url(#sF)"/>
<path d="M174.3 131.6 C177.1 128.2 184.0 126.2 191.3 124.3 C198.6 122.5 213.2 119.7 218.1 120.7 C223.0 121.7 223.0 127.8 220.5 130.4 C218.1 133.0 209.2 133.9 203.5 136.5 C197.8 139.1 191.3 144.8 186.5 146.2 C181.6 147.6 176.3 147.4 174.3 145.0 C172.3 142.6 171.5 135.1 174.3 131.6Z" fill="#d3e8c2" />
<path d="M174.3 131.6 C177.1 128.2 184.0 126.2 191.3 124.3 C198.6 122.5 213.2 119.7 218.1 120.7 C223.0 121.7 223.0 127.8 220.5 130.4 C218.1 133.0 209.2 133.9 203.5 136.5 C197.8 139.1 191.3 144.8 186.5 146.2 C181.6 147.6 176.3 147.4 174.3 145.0 C172.3 142.6 171.5 135.1 174.3 131.6Z" fill="url(#sF)"/>
<path d="M202.3 148.7 C204.7 146.4 213.0 143.8 218.1 142.6 C223.2 141.4 230.7 139.9 232.7 141.4 C234.7 142.8 233.1 148.5 230.3 151.1 C227.4 153.7 220.1 156.4 215.7 157.2 C211.2 158.0 205.7 157.4 203.5 156.0 C201.3 154.5 199.8 150.9 202.3 148.7Z" fill="#edf0d6" />
<path d="M202.3 148.7 C204.7 146.4 213.0 143.8 218.1 142.6 C223.2 141.4 230.7 139.9 232.7 141.4 C234.7 142.8 233.1 148.5 230.3 151.1 C227.4 153.7 220.1 156.4 215.7 157.2 C211.2 158.0 205.7 157.4 203.5 156.0 C201.3 154.5 199.8 150.9 202.3 148.7Z" fill="url(#sF)"/>
<path d="M185.2 156.0 C186.9 153.5 196.0 151.9 198.6 153.5 C201.3 155.2 202.7 163.3 201.1 165.7 C199.4 168.1 191.5 169.7 188.9 168.1 C186.3 166.5 183.6 158.4 185.2 156.0Z" fill="#d3e8c2" />
<path d="M185.2 156.0 C186.9 153.5 196.0 151.9 198.6 153.5 C201.3 155.2 202.7 163.3 201.1 165.7 C199.4 168.1 191.5 169.7 188.9 168.1 C186.3 166.5 183.6 158.4 185.2 156.0Z" fill="url(#sF)"/>
<path d="M182.8 177.9 C184.4 174.2 188.3 170.2 193.8 168.1 C199.2 166.1 211.2 164.5 215.7 165.7 C220.1 166.9 220.9 171.8 220.5 175.4 C220.1 179.1 217.1 186.0 213.2 187.6 C209.4 189.2 202.3 184.8 197.4 185.2 C192.5 185.6 186.5 191.2 184.0 190.0 C181.6 188.8 181.2 181.5 182.8 177.9Z" fill="#d3e8c2" />
<path d="M182.8 177.9 C184.4 174.2 188.3 170.2 193.8 168.1 C199.2 166.1 211.2 164.5 215.7 165.7 C220.1 166.9 220.9 171.8 220.5 175.4 C220.1 179.1 217.1 186.0 213.2 187.6 C209.4 189.2 202.3 184.8 197.4 185.2 C192.5 185.6 186.5 191.2 184.0 190.0 C181.6 188.8 181.2 181.5 182.8 177.9Z" fill="url(#sF)"/>
<path d="M220.5 185.2 C220.9 180.9 224.6 173.0 227.8 168.1 C231.1 163.3 237.0 156.8 240.0 156.0 C243.0 155.2 244.9 160.4 246.1 163.3 C247.3 166.1 249.1 168.9 247.3 173.0 C245.5 177.0 238.8 184.1 235.1 187.6 C231.5 191.0 227.8 194.1 225.4 193.7 C223.0 193.3 220.1 189.4 220.5 185.2Z" fill="#d3e8c2" />
<path d="M220.5 185.2 C220.9 180.9 224.6 173.0 227.8 168.1 C231.1 163.3 237.0 156.8 240.0 156.0 C243.0 155.2 244.9 160.4 246.1 163.3 C247.3 166.1 249.1 168.9 247.3 173.0 C245.5 177.0 238.8 184.1 235.1 187.6 C231.5 191.0 227.8 194.1 225.4 193.7 C223.0 193.3 220.1 189.4 220.5 185.2Z" fill="url(#sF)"/>
<path d="M259.5 151.1 C260.5 146.6 265.9 145.2 268.0 146.2 C270.0 147.2 271.8 153.5 271.6 157.2 C271.4 160.8 265.9 165.5 266.8 168.1 C267.6 170.8 275.7 171.4 276.5 173.0 C277.3 174.6 274.1 177.9 271.6 177.9 C269.2 177.9 263.9 177.5 261.9 173.0 C259.9 168.5 258.4 155.6 259.5 151.1Z" fill="#d3e8c2" />
<path d="M259.5 151.1 C260.5 146.6 265.9 145.2 268.0 146.2 C270.0 147.2 271.8 153.5 271.6 157.2 C271.4 160.8 265.9 165.5 266.8 168.1 C267.6 170.8 275.7 171.4 276.5 173.0 C277.3 174.6 274.1 177.9 271.6 177.9 C269.2 177.9 263.9 177.5 261.9 173.0 C259.9 168.5 258.4 155.6 259.5 151.1Z" fill="url(#sF)"/>
<path d="M164.6 119.5 C167.4 118.0 178.6 119.3 181.6 120.7 C184.6 122.1 185.7 126.6 182.8 128.0 C180.0 129.4 167.6 130.6 164.6 129.2 C161.5 127.8 161.7 120.9 164.6 119.5Z" fill="#edf0d6" />
<path d="M164.6 119.5 C167.4 118.0 178.6 119.3 181.6 120.7 C184.6 122.1 185.7 126.6 182.8 128.0 C180.0 129.4 167.6 130.6 164.6 129.2 C161.5 127.8 161.7 120.9 164.6 119.5Z" fill="url(#sF)"/>
<path d="M195.0 194.9 C196.8 193.7 204.1 192.7 205.9 193.7 C207.8 194.7 207.8 199.8 205.9 201.0 C204.1 202.2 196.8 202.0 195.0 201.0 C193.2 200.0 193.2 196.1 195.0 194.9Z" fill="#edf0d6" />
<path d="M195.0 194.9 C196.8 193.7 204.1 192.7 205.9 193.7 C207.8 194.7 207.8 199.8 205.9 201.0 C204.1 202.2 196.8 202.0 195.0 201.0 C193.2 200.0 193.2 196.1 195.0 194.9Z" fill="url(#sF)"/>
<path d="M202.3 136.5 C203.1 134.9 208.2 133.9 209.6 135.3 C211.0 136.7 211.6 143.4 210.8 145.0 C210.0 146.6 206.1 146.4 204.7 145.0 C203.3 143.6 201.5 138.1 202.3 136.5Z" fill="#dddcdc" />
<path d="M174.3 141.4 C175.9 139.7 183.2 138.5 185.2 138.9 C187.3 139.3 188.1 142.2 186.5 143.8 C184.8 145.4 177.5 149.1 175.5 148.7 C173.5 148.3 172.7 143.0 174.3 141.4Z" fill="#dddcdc" />
<path d="M246.1 112.2 C247.1 111.2 251.1 111.2 252.2 112.2 C253.2 113.2 253.2 117.2 252.2 118.2 C251.1 119.3 247.1 119.3 246.1 118.2 C245.1 117.2 245.1 113.2 246.1 112.2Z" fill="#dddcdc" />
<path d="M270.4 129.8 C271.4 128.8 275.5 128.3 276.5 129.2 C277.5 130.1 277.5 134.3 276.5 135.3 C275.5 136.3 271.4 136.2 270.4 135.3 C269.4 134.4 269.4 130.8 270.4 129.8Z" fill="#dddcdc" />
<path d="M426.5 187.6 C430.5 186.4 443.4 187.2 455.7 187.6 C467.9 188.0 492.6 187.8 499.9 190.0 C507.3 192.3 509.3 199.1 499.9 201.0 C490.5 202.8 454.9 202.0 443.5 201.0 C432.1 200.0 434.2 197.1 431.3 194.9 C428.5 192.7 422.4 188.8 426.5 187.6Z" fill="#cfe5c2" />
<path d="M426.5 187.6 C430.5 186.4 443.4 187.2 455.7 187.6 C467.9 188.0 492.6 187.8 499.9 190.0 C507.3 192.3 509.3 199.1 499.9 201.0 C490.5 202.8 454.9 202.0 443.5 201.0 C432.1 200.0 434.2 197.1 431.3 194.9 C428.5 192.7 422.4 188.8 426.5 187.6Z" fill="url(#sV)"/>
<path d="M371.7 112.2 C372.5 109.3 377.8 104.7 380.2 103.6 C382.7 102.6 385.9 103.4 386.3 106.1 C386.7 108.7 383.5 116.0 382.7 119.5 C381.9 122.9 383.1 125.1 381.4 126.8 C379.8 128.4 373.9 130.2 372.9 129.2 C371.9 128.2 375.6 123.5 375.4 120.7 C375.2 117.8 370.9 115.0 371.7 112.2Z" fill="#cde9b6" />
<path d="M421.6 119.5 C421.6 117.4 425.0 119.1 426.5 120.7 C427.9 122.3 430.1 127.2 430.1 129.2 C430.1 131.2 427.9 134.5 426.5 132.8 C425.0 131.2 421.6 121.5 421.6 119.5Z" fill="#edf0d6" />
<path d="M432.5 128.0 C433.1 127.0 436.4 127.0 437.4 128.0 C438.4 129.0 439.2 133.0 438.6 134.1 C438.0 135.1 434.8 135.1 433.8 134.1 C432.7 133.0 431.9 129.0 432.5 128.0Z" fill="#edf0d6" />
<path d="M445.9 134.1 C447.5 133.9 450.8 135.9 455.7 136.5 C460.5 137.1 472.7 136.3 475.1 137.7 C477.6 139.1 473.5 144.4 470.3 145.0 C467.0 145.6 459.7 142.6 455.7 141.4 C451.6 140.1 447.5 138.9 445.9 137.7 C444.3 136.5 444.3 134.3 445.9 134.1Z" fill="#edf0d6" />
<path d="M421.6 138.9 C422.6 138.2 426.9 137.3 427.7 137.7 C428.5 138.1 427.5 140.7 426.5 141.4 C425.4 142.1 422.4 142.4 421.6 142.0 C420.8 141.6 420.6 139.6 421.6 138.9Z" fill="#edf0d6" />
<path d="M431.3 147.4 C431.7 146.0 433.4 143.4 435.0 142.6 C436.6 141.8 439.8 141.6 441.1 142.6 C442.3 143.6 443.7 147.2 442.3 148.7 C440.9 150.1 434.4 151.3 432.5 151.1 C430.7 150.9 430.9 148.9 431.3 147.4Z" fill="#edf0d6" />
<path d="M467.8 163.3 C470.9 163.3 484.2 163.9 487.3 165.7 C490.3 167.5 486.9 173.8 486.1 174.2 C485.3 174.6 485.3 169.5 482.4 168.1 C479.6 166.7 471.5 166.5 469.0 165.7 C466.6 164.9 464.8 163.3 467.8 163.3Z" fill="#f2efe9" />
<path d="M437.4 173.0 C438.4 171.4 444.9 171.0 449.6 171.8 C454.2 172.6 460.3 177.9 465.4 177.9 C470.5 177.9 477.6 171.8 480.0 171.8 C482.4 171.8 482.4 175.6 480.0 177.9 C477.6 180.1 471.5 184.5 465.4 185.2 C459.3 185.8 448.2 183.5 443.5 181.5 C438.8 179.5 436.4 174.6 437.4 173.0Z" fill="#cde9b6" />
<path d="M402.1 120.7 C402.9 117.2 406.8 111.6 408.2 109.7 C409.6 107.9 410.6 105.3 410.6 109.7 C410.6 114.2 409.4 133.0 408.2 136.5 C407.0 139.9 404.4 133.0 403.3 130.4 C402.3 127.8 401.3 124.1 402.1 120.7Z" fill="#dde9d6" />
<path d="M419.2 160.8 C421.0 159.0 428.9 154.3 431.3 153.5 C433.8 152.7 435.6 154.1 433.8 156.0 C431.9 157.8 422.8 163.7 420.4 164.5 C417.9 165.3 417.3 162.7 419.2 160.8Z" fill="#f2efe9" />
<path d="M417.9 165.7 C421.0 163.9 432.7 161.6 435.0 162.0 C437.2 162.4 432.9 165.5 431.3 168.1 C429.7 170.8 427.3 176.0 425.2 177.9 C423.2 179.7 420.6 179.9 419.2 179.1 C417.7 178.3 416.9 175.2 416.7 173.0 C416.5 170.8 414.9 167.5 417.9 165.7Z" fill="#dddcdc" />
<path d="M400.9 175.4 C401.5 174.2 403.7 173.2 404.6 174.2 C405.4 175.2 406.4 180.3 405.8 181.5 C405.2 182.7 401.7 182.5 400.9 181.5 C400.1 180.5 400.3 176.6 400.9 175.4Z" fill="#dddcdc" />
<path d="M386.3 165.7 C388.1 164.1 399.1 160.8 402.1 160.8 C405.2 160.8 406.4 164.1 404.6 165.7 C402.7 167.3 394.2 170.6 391.2 170.6 C388.1 170.6 384.5 167.3 386.3 165.7Z" fill="#c9dcb4" />
<path d="M388.7 171.8 C391.0 170.9 400.7 168.9 402.1 169.3 C403.5 169.7 399.5 173.3 397.3 174.2 C395.0 175.1 390.2 175.2 388.7 174.8 C387.3 174.4 386.5 172.7 388.7 171.8Z" fill="#dddcdc" />
<path d="M353.5 194.9 C355.9 193.7 365.6 192.7 368.1 193.7 C370.5 194.7 370.5 199.8 368.1 201.0 C365.6 202.2 355.9 202.0 353.5 201.0 C351.0 200.0 351.0 196.1 353.5 194.9Z" fill="#cde9b6" />
<path d="M476.3 129.2 C479.7 126.8 496.0 122.5 499.9 124.3 C503.9 126.2 503.3 137.7 499.9 140.1 C496.6 142.6 483.9 140.8 480.0 138.9 C476.1 137.1 473.0 131.6 476.3 129.2Z" fill="#c4dfb6" />
<path d="M-2.4 198.8 C0.0 196.6 6.1 197.8 12.2 197.6 C18.2 197.4 30.0 195.9 34.1 197.6 C38.1 199.2 38.1 205.1 36.5 207.3 C34.9 209.5 28.4 209.5 24.3 210.9 C20.3 212.4 15.0 215.8 12.2 215.8 C9.3 215.8 9.7 211.8 7.3 210.9 C4.9 210.1 -0.8 213.0 -2.4 210.9 C-4.1 208.9 -4.9 201.0 -2.4 198.8Z" fill="#f2efe9" />
<path d="M41.4 197.6 C43.2 196.4 52.3 196.1 53.5 197.6 C54.7 199.0 50.5 204.9 48.7 206.1 C46.8 207.3 43.8 206.3 42.6 204.9 C41.4 203.4 39.5 198.8 41.4 197.6Z" fill="#f2efe9" />
<path d="M53.5 204.9 C53.9 202.6 58.4 200.4 60.8 201.2 C63.3 202.0 65.3 206.9 68.1 209.7 C71.0 212.6 77.9 216.6 77.9 218.2 C77.9 219.9 71.4 220.1 68.1 219.5 C64.9 218.9 60.8 217.0 58.4 214.6 C56.0 212.2 53.1 207.1 53.5 204.9Z" fill="#f2efe9" />
<path d="M75.4 212.2 C75.6 208.7 80.5 200.0 83.9 197.6 C87.4 195.1 95.1 195.5 96.1 197.6 C97.1 199.6 92.3 206.3 90.0 209.7 C87.8 213.2 85.2 217.8 82.7 218.2 C80.3 218.7 75.2 215.6 75.4 212.2Z" fill="#f2efe9" />
<path d="M46.2 212.2 C46.8 211.2 50.1 210.9 51.1 212.2 C52.1 213.4 52.9 218.5 52.3 219.5 C51.7 220.5 48.5 219.5 47.4 218.2 C46.4 217.0 45.6 213.2 46.2 212.2Z" fill="#f2efe9" />
<path d="M6.1 229.2 C7.7 227.2 13.0 229.0 17.0 228.0 C21.1 227.0 26.6 224.5 30.4 223.1 C34.3 221.7 37.1 218.9 40.1 219.5 C43.2 220.1 46.0 225.1 48.7 226.8 C51.3 228.4 56.0 228.4 56.0 229.2 C56.0 230.0 52.3 230.4 48.7 231.6 C45.0 232.8 36.9 234.3 34.1 236.5 C31.2 238.7 33.5 241.6 31.6 245.0 C29.8 248.5 26.2 255.6 23.1 257.2 C20.1 258.8 14.8 256.6 13.4 254.7 C12.0 252.9 15.6 248.7 14.6 246.2 C13.6 243.8 8.7 243.0 7.3 240.1 C5.9 237.3 4.5 231.2 6.1 229.2Z" fill="#f2efe9" />
<path d="M15.8 198.8 C17.0 196.8 22.9 196.6 24.3 198.8 C25.8 201.0 25.5 210.1 24.3 212.2 C23.1 214.2 18.5 213.2 17.0 210.9 C15.6 208.7 14.6 200.8 15.8 198.8Z" fill="#dddcdc" />
<path d="M30.4 223.1 C32.0 220.7 39.7 220.5 41.4 221.9 C43.0 223.3 41.8 229.2 40.1 231.6 C38.5 234.1 33.3 237.9 31.6 236.5 C30.0 235.1 28.8 225.5 30.4 223.1Z" fill="#dddcdc" />
<path d="M26.8 248.7 C27.8 246.6 32.6 246.0 34.1 247.4 C35.5 248.9 36.3 255.2 35.3 257.2 C34.3 259.2 29.4 261.0 28.0 259.6 C26.6 258.2 25.8 250.7 26.8 248.7Z" fill="#dddcdc" />
<path d="M80.3 202.4 C81.9 201.0 90.8 199.2 92.5 200.0 C94.1 200.8 91.6 205.9 90.0 207.3 C88.4 208.7 84.3 209.3 82.7 208.5 C81.1 207.7 78.7 203.9 80.3 202.4Z" fill="#dddcdc" />
<path d="M-2.4 274.2 C0.2 271.2 9.7 272.8 13.4 274.2 C17.0 275.6 19.1 280.3 19.5 282.7 C19.9 285.2 19.5 287.2 15.8 288.8 C12.2 290.4 0.6 294.9 -2.4 292.5 C-5.5 290.0 -5.1 277.3 -2.4 274.2Z" fill="#eaeddc" />
<path d="M90.0 256.0 C94.5 250.1 99.4 245.8 104.6 242.6 C109.9 239.3 117.0 236.7 121.7 236.5 C126.3 236.3 130.6 238.7 132.6 241.4 C134.6 244.0 134.4 249.5 133.8 252.3 C133.2 255.2 132.2 256.6 129.0 258.4 C125.7 260.2 118.8 262.0 114.4 263.3 C109.9 264.5 105.8 264.1 102.2 265.7 C98.5 267.3 95.3 271.0 92.5 273.0 C89.6 275.0 86.8 275.8 85.2 277.9 C83.5 279.9 84.8 282.7 82.7 285.2 C80.7 287.6 73.8 293.7 73.0 292.5 C72.2 291.2 75.0 283.9 77.9 277.9 C80.7 271.8 85.6 261.8 90.0 256.0Z" fill="#d3e8c2" />
<path d="M107.1 248.7 C109.1 245.8 117.8 240.6 121.7 240.1 C125.5 239.7 130.2 243.6 130.2 246.2 C130.2 248.9 125.1 254.1 121.7 256.0 C118.2 257.8 111.9 258.4 109.5 257.2 C107.1 256.0 105.0 251.5 107.1 248.7Z" fill="#dfedca" />
<path d="M107.1 248.7 C109.1 245.8 117.8 240.6 121.7 240.1 C125.5 239.7 130.2 243.6 130.2 246.2 C130.2 248.9 125.1 254.1 121.7 256.0 C118.2 257.8 111.9 258.4 109.5 257.2 C107.1 256.0 105.0 251.5 107.1 248.7Z" fill="url(#sM)"/>
<path d="M127.7 285.2 C129.6 281.9 135.8 276.2 139.9 273.0 C144.0 269.7 147.2 266.5 152.1 265.7 C156.9 264.9 166.3 262.2 169.1 268.1 C171.9 274.0 176.6 295.5 169.1 301.0 C161.6 306.4 130.8 302.4 124.1 301.0 C117.4 299.6 128.3 295.1 129.0 292.5 C129.6 289.8 125.9 288.4 127.7 285.2Z" fill="#dfedca" />
<path d="M127.7 285.2 C129.6 281.9 135.8 276.2 139.9 273.0 C144.0 269.7 147.2 266.5 152.1 265.7 C156.9 264.9 166.3 262.2 169.1 268.1 C171.9 274.0 176.6 295.5 169.1 301.0 C161.6 306.4 130.8 302.4 124.1 301.0 C117.4 299.6 128.3 295.1 129.0 292.5 C129.6 289.8 125.9 288.4 127.7 285.2Z" fill="url(#sM)"/>
<path d="M143.6 277.9 C146.0 275.4 153.9 273.0 158.2 273.0 C162.4 273.0 167.3 275.0 169.1 277.9 C170.9 280.7 171.9 287.6 169.1 290.0 C166.3 292.5 156.3 292.9 152.1 292.5 C147.8 292.1 145.0 290.0 143.6 287.6 C142.1 285.2 141.1 280.3 143.6 277.9Z" fill="#edf0d6" />
<path d="M104.6 207.3 C106.2 205.5 112.1 202.8 114.4 203.6 C116.6 204.5 118.8 209.9 118.0 212.2 C117.2 214.4 111.7 216.6 109.5 217.0 C107.3 217.4 105.4 216.2 104.6 214.6 C103.8 213.0 103.0 209.1 104.6 207.3Z" fill="#edf0d6" />
<path d="M133.8 209.7 C135.0 208.5 140.7 207.7 142.3 208.5 C144.0 209.3 144.8 213.4 143.6 214.6 C142.3 215.8 136.7 216.6 135.0 215.8 C133.4 215.0 132.6 210.9 133.8 209.7Z" fill="#cde9b6" />
<path d="M139.9 218.2 C144.0 217.8 147.0 220.3 146.0 221.9 C145.0 223.5 138.1 226.4 133.8 228.0 C129.6 229.6 122.5 232.2 120.4 231.6 C118.4 231.0 118.4 226.6 121.7 224.3 C124.9 222.1 135.8 218.7 139.9 218.2Z" fill="#d3e8c2" />
<path d="M150.9 248.7 C153.5 247.4 166.1 244.6 169.1 245.0 C172.1 245.4 171.7 249.9 169.1 251.1 C166.5 252.3 156.3 252.7 153.3 252.3 C150.2 251.9 148.2 249.9 150.9 248.7Z" fill="#d3e8c2" />
<path d="M41.4 273.0 C43.2 271.0 48.5 269.3 51.1 270.6 C53.7 271.8 58.0 277.5 57.2 280.3 C56.4 283.1 49.1 287.2 46.2 287.6 C43.4 288.0 41.0 285.2 40.1 282.7 C39.3 280.3 39.5 275.0 41.4 273.0Z" fill="#d3e8c2" />
<path d="M51.1 292.5 C53.1 290.6 57.6 290.0 63.3 290.0 C68.9 290.0 77.5 292.5 85.2 292.5 C92.9 292.5 104.2 288.6 109.5 290.0 C114.8 291.4 126.5 299.1 116.8 301.0 C107.1 302.8 62.0 302.4 51.1 301.0 C40.1 299.6 49.1 294.3 51.1 292.5Z" fill="#dfedca" />
<path d="M51.1 292.5 C53.1 290.6 57.6 290.0 63.3 290.0 C68.9 290.0 77.5 292.5 85.2 292.5 C92.9 292.5 104.2 288.6 109.5 290.0 C114.8 291.4 126.5 299.1 116.8 301.0 C107.1 302.8 62.0 302.4 51.1 301.0 C40.1 299.6 49.1 294.3 51.1 292.5Z" fill="url(#sM)"/>
<path d="M90.0 253.5 C91.2 253.0 96.3 253.9 97.3 254.7 C98.3 255.6 97.3 257.9 96.1 258.4 C94.9 258.9 91.0 258.6 90.0 257.8 C89.0 257.0 88.8 254.0 90.0 253.5Z" fill="#cde9b6" />
<path d="M109.5 253.5 C111.1 252.7 117.2 252.3 119.2 253.5 C121.2 254.7 122.5 259.4 121.7 260.8 C120.8 262.2 116.4 262.4 114.4 262.0 C112.3 261.6 110.3 259.8 109.5 258.4 C108.7 257.0 107.9 254.3 109.5 253.5Z" fill="#dddcdc" />
<path d="M136.3 219.5 C137.3 218.5 142.1 217.4 143.6 218.2 C145.0 219.1 145.8 223.3 144.8 224.3 C143.8 225.3 138.9 225.1 137.5 224.3 C136.1 223.5 135.2 220.5 136.3 219.5Z" fill="#dddcdc" />
<path d="M65.7 273.0 C66.9 272.2 71.8 272.2 73.0 273.0 C74.2 273.8 74.2 277.0 73.0 277.9 C71.8 278.7 66.9 278.7 65.7 277.9 C64.5 277.0 64.5 273.8 65.7 273.0Z" fill="#dddcdc" />
<path d="M75.4 285.2 C77.0 282.5 85.2 282.5 87.6 285.2 C90.0 287.8 91.6 298.3 90.0 301.0 C88.4 303.6 80.3 303.6 77.9 301.0 C75.4 298.3 73.8 287.8 75.4 285.2Z" fill="#dddcdc" />
<path d="M58.4 291.2 C59.6 290.2 64.5 290.2 65.7 291.2 C66.9 292.3 66.9 296.3 65.7 297.3 C64.5 298.3 59.6 298.3 58.4 297.3 C57.2 296.3 57.2 292.3 58.4 291.2Z" fill="#dddcdc" />
<path d="M119.2 296.1 C120.8 295.3 127.3 295.3 129.0 296.1 C130.6 296.9 130.6 300.2 129.0 301.0 C127.3 301.8 120.8 301.8 119.2 301.0 C117.6 300.2 117.6 296.9 119.2 296.1Z" fill="#dddcdc" />
<path d="M137.5 290.0 C138.9 289.2 144.6 289.2 146.0 290.0 C147.4 290.8 147.4 294.1 146.0 294.9 C144.6 295.7 138.9 295.7 137.5 294.9 C136.1 294.1 136.1 290.8 137.5 290.0Z" fill="#dddcdc" />
<path d="M184.0 241.4 C185.0 238.1 193.6 232.4 197.4 231.6 C201.3 230.8 205.1 233.7 207.1 236.5 C209.2 239.3 207.8 245.8 209.6 248.7 C211.4 251.5 215.5 254.5 218.1 253.5 C220.7 252.5 222.6 245.0 225.4 242.6 C228.2 240.1 230.7 239.3 235.1 238.9 C239.6 238.5 247.7 241.4 252.2 240.1 C256.6 238.9 257.8 232.8 261.9 231.6 C265.9 230.4 269.4 232.2 276.5 232.8 C283.6 233.5 298.4 235.1 304.5 235.3 C310.6 235.5 307.7 233.3 313.0 234.1 C318.3 234.9 332.2 234.5 336.1 240.1 C340.0 245.8 342.0 262.7 336.1 268.1 C330.2 273.6 311.2 271.4 300.8 273.0 C290.5 274.6 282.2 275.8 274.1 277.9 C265.9 279.9 258.6 281.3 252.2 285.2 C245.7 289.0 249.7 298.3 235.1 301.0 C220.5 303.6 176.3 305.6 164.6 301.0 C152.8 296.3 162.9 279.3 164.6 273.0 C166.2 266.7 171.1 265.7 174.3 263.3 C177.5 260.8 181.2 260.4 184.0 258.4 C186.9 256.4 191.3 253.9 191.3 251.1 C191.3 248.3 183.0 244.6 184.0 241.4Z" fill="#dfedca" />
<path d="M184.0 241.4 C185.0 238.1 193.6 232.4 197.4 231.6 C201.3 230.8 205.1 233.7 207.1 236.5 C209.2 239.3 207.8 245.8 209.6 248.7 C211.4 251.5 215.5 254.5 218.1 253.5 C220.7 252.5 222.6 245.0 225.4 242.6 C228.2 240.1 230.7 239.3 235.1 238.9 C239.6 238.5 247.7 241.4 252.2 240.1 C256.6 238.9 257.8 232.8 261.9 231.6 C265.9 230.4 269.4 232.2 276.5 232.8 C283.6 233.5 298.4 235.1 304.5 235.3 C310.6 235.5 307.7 233.3 313.0 234.1 C318.3 234.9 332.2 234.5 336.1 240.1 C340.0 245.8 342.0 262.7 336.1 268.1 C330.2 273.6 311.2 271.4 300.8 273.0 C290.5 274.6 282.2 275.8 274.1 277.9 C265.9 279.9 258.6 281.3 252.2 285.2 C245.7 289.0 249.7 298.3 235.1 301.0 C220.5 303.6 176.3 305.6 164.6 301.0 C152.8 296.3 162.9 279.3 164.6 273.0 C166.2 266.7 171.1 265.7 174.3 263.3 C177.5 260.8 181.2 260.4 184.0 258.4 C186.9 256.4 191.3 253.9 191.3 251.1 C191.3 248.3 183.0 244.6 184.0 241.4Z" fill="url(#sM)"/>
<path d="M181.6 275.4 C185.2 271.6 198.8 275.0 203.5 277.9 C208.2 280.7 209.6 288.6 209.6 292.5 C209.6 296.3 208.2 299.6 203.5 301.0 C198.8 302.4 185.2 305.2 181.6 301.0 C177.9 296.7 177.9 279.3 181.6 275.4Z" fill="#bddab1" />
<path d="M164.6 253.5 C166.6 250.7 175.1 253.9 176.7 256.0 C178.4 258.0 176.3 262.9 174.3 265.7 C172.3 268.5 166.2 275.0 164.6 273.0 C162.9 271.0 162.5 256.4 164.6 253.5Z" fill="#bddab1" />
<path d="M261.9 282.7 C265.1 278.9 274.1 274.8 276.5 277.9 C278.9 280.9 279.7 297.1 276.5 301.0 C273.2 304.8 259.5 304.0 257.0 301.0 C254.6 297.9 258.6 286.6 261.9 282.7Z" fill="#bddab1" />
<path d="M271.6 248.7 C273.2 244.2 278.9 240.1 283.8 238.9 C288.7 237.7 297.4 239.3 300.8 241.4 C304.3 243.4 306.5 247.4 304.5 251.1 C302.4 254.7 293.7 260.8 288.7 263.3 C283.6 265.7 276.9 268.1 274.1 265.7 C271.2 263.3 270.0 253.1 271.6 248.7Z" fill="#edf0d6" />
<path d="M227.8 246.2 C229.4 244.8 238.0 246.2 242.4 248.7 C246.9 251.1 254.2 258.0 254.6 260.8 C255.0 263.7 248.5 266.3 244.9 265.7 C241.2 265.1 235.5 260.4 232.7 257.2 C229.9 253.9 226.2 247.6 227.8 246.2Z" fill="#edf0d6" />
<path d="M164.6 277.9 C166.2 275.0 172.3 274.2 174.3 275.4 C176.3 276.6 177.5 282.3 176.7 285.2 C175.9 288.0 171.5 291.2 169.4 292.5 C167.4 293.7 165.4 294.9 164.6 292.5 C163.8 290.0 162.9 280.7 164.6 277.9Z" fill="#edf0d6" />
<path d="M215.7 277.9 C217.7 276.6 227.8 276.6 230.3 277.9 C232.7 279.1 232.3 283.9 230.3 285.2 C228.2 286.4 220.5 286.4 218.1 285.2 C215.7 283.9 213.6 279.1 215.7 277.9Z" fill="#edf0d6" />
<path d="M308.1 240.1 C309.7 238.1 314.4 236.3 319.1 236.5 C323.7 236.7 333.3 238.9 336.1 241.4 C338.9 243.8 338.1 249.1 336.1 251.1 C334.1 253.1 327.8 252.3 323.9 253.5 C320.1 254.7 315.4 259.2 313.0 258.4 C310.6 257.6 310.1 251.7 309.3 248.7 C308.5 245.6 306.5 242.2 308.1 240.1Z" fill="#f2efe9" />
<path d="M252.2 242.6 C253.8 241.6 261.9 240.8 264.3 241.4 C266.8 242.0 268.4 245.2 266.8 246.2 C265.1 247.2 257.0 248.1 254.6 247.4 C252.2 246.8 250.5 243.6 252.2 242.6Z" fill="#dddcdc" />
<path d="M298.4 253.5 C300.4 252.3 308.7 253.3 313.0 252.3 C317.2 251.3 322.1 247.2 323.9 247.4 C325.8 247.6 325.6 251.5 323.9 253.5 C322.3 255.6 318.1 258.6 314.2 259.6 C310.3 260.6 303.5 260.6 300.8 259.6 C298.2 258.6 296.4 254.7 298.4 253.5Z" fill="#dddcdc" />
<path d="M205.9 257.2 C207.6 256.2 215.9 256.2 218.1 257.2 C220.3 258.2 220.9 262.2 219.3 263.3 C217.7 264.3 210.6 264.3 208.4 263.3 C206.1 262.2 204.3 258.2 205.9 257.2Z" fill="#dddcdc" />
<path d="M257.0 265.7 C258.2 264.7 263.3 264.7 264.3 265.7 C265.3 266.7 264.3 270.8 263.1 271.8 C261.9 272.8 258.0 272.8 257.0 271.8 C256.0 270.8 255.8 266.7 257.0 265.7Z" fill="#dddcdc" />
<path d="M244.9 274.2 C246.5 273.4 253.0 273.4 254.6 274.2 C256.2 275.0 256.2 278.3 254.6 279.1 C253.0 279.9 246.5 279.9 244.9 279.1 C243.2 278.3 243.2 275.0 244.9 274.2Z" fill="#dddcdc" />
<path d="M233.9 283.9 C236.7 281.7 249.1 280.9 252.2 282.7 C255.2 284.5 255.0 292.7 252.2 294.9 C249.3 297.1 238.2 297.9 235.1 296.1 C232.1 294.3 231.1 286.2 233.9 283.9Z" fill="#ebdbe8" />
<path d="M188.9 197.6 C190.7 196.1 201.5 196.6 203.5 197.6 C205.5 198.6 202.9 202.2 201.1 203.6 C199.2 205.1 194.6 207.1 192.5 206.1 C190.5 205.1 187.1 199.0 188.9 197.6Z" fill="#edf0d6" />
<path d="M394.8 217.0 C395.8 213.8 398.9 212.0 402.1 210.9 C405.4 209.9 410.2 209.9 414.3 210.9 C418.3 212.0 423.0 214.2 426.5 217.0 C429.9 219.9 433.1 224.1 435.0 228.0 C436.8 231.8 438.0 238.7 437.4 240.1 C436.8 241.6 433.6 238.7 431.3 236.5 C429.1 234.3 427.3 229.4 424.0 226.8 C420.8 224.1 415.9 221.5 411.9 220.7 C407.8 219.9 402.3 220.3 399.7 221.9 C397.1 223.5 396.9 231.2 396.0 230.4 C395.2 229.6 393.8 220.3 394.8 217.0Z" fill="#d3e7c6" />
<path d="M394.8 217.0 C395.8 213.8 398.9 212.0 402.1 210.9 C405.4 209.9 410.2 209.9 414.3 210.9 C418.3 212.0 423.0 214.2 426.5 217.0 C429.9 219.9 433.1 224.1 435.0 228.0 C436.8 231.8 438.0 238.7 437.4 240.1 C436.8 241.6 433.6 238.7 431.3 236.5 C429.1 234.3 427.3 229.4 424.0 226.8 C420.8 224.1 415.9 221.5 411.9 220.7 C407.8 219.9 402.3 220.3 399.7 221.9 C397.1 223.5 396.9 231.2 396.0 230.4 C395.2 229.6 393.8 220.3 394.8 217.0Z" fill="url(#sV)"/>
<path d="M443.5 218.2 C445.9 215.8 451.6 215.6 455.7 215.8 C459.7 216.0 464.2 216.8 467.8 219.5 C471.5 222.1 475.7 226.8 477.6 231.6 C479.4 236.5 479.4 243.8 478.8 248.7 C478.2 253.5 476.7 258.4 473.9 260.8 C471.1 263.3 465.6 263.9 461.7 263.3 C457.9 262.7 453.6 260.0 450.8 257.2 C447.9 254.3 446.3 250.7 444.7 246.2 C443.1 241.8 441.3 235.1 441.1 230.4 C440.9 225.8 441.1 220.7 443.5 218.2Z" fill="#d3e7c6" />
<path d="M447.1 220.7 C449.0 217.6 457.1 217.2 460.5 218.2 C464.0 219.3 466.8 223.1 467.8 226.8 C468.8 230.4 468.6 237.3 466.6 240.1 C464.6 243.0 458.5 244.4 455.7 243.8 C452.8 243.2 451.0 240.3 449.6 236.5 C448.2 232.6 445.3 223.7 447.1 220.7Z" fill="#dddcdc" />
<path d="M411.9 236.5 C413.5 232.0 417.1 227.0 419.2 226.8 C421.2 226.6 424.0 232.4 424.0 235.3 C424.0 238.1 421.2 239.5 419.2 243.8 C417.1 248.1 413.5 259.2 411.9 260.8 C410.2 262.4 409.4 257.6 409.4 253.5 C409.4 249.5 410.2 241.0 411.9 236.5Z" fill="#eef0d5" />
<path d="M426.5 256.0 C428.1 255.2 434.6 254.7 436.2 255.4 C437.8 256.0 437.8 258.8 436.2 259.6 C434.6 260.4 428.1 260.8 426.5 260.2 C424.8 259.6 424.8 256.8 426.5 256.0Z" fill="#cde9b6" />
<path d="M374.1 240.1 C375.4 237.7 380.4 243.2 382.7 246.2 C384.9 249.3 386.1 254.7 387.5 258.4 C388.9 262.0 391.2 264.9 391.2 268.1 C391.2 271.4 390.4 276.2 387.5 277.9 C384.7 279.5 376.2 280.7 374.1 277.9 C372.1 275.0 375.4 267.1 375.4 260.8 C375.4 254.5 372.9 242.6 374.1 240.1Z" fill="#c4e6b4" />
<path d="M349.8 257.2 C352.5 254.7 361.0 251.7 364.4 251.1 C367.9 250.5 371.5 251.9 370.5 253.5 C369.5 255.2 360.8 258.4 358.3 260.8 C355.9 263.3 354.5 266.1 355.9 268.1 C357.3 270.2 365.8 271.4 366.8 273.0 C367.9 274.6 365.0 277.0 362.0 277.9 C358.9 278.7 350.8 279.9 348.6 277.9 C346.4 275.8 348.4 269.1 348.6 265.7 C348.8 262.2 347.2 259.6 349.8 257.2Z" fill="#edf0d6" />
<path d="M436.2 269.3 C437.6 267.7 441.9 266.7 443.5 268.1 C445.1 269.5 447.3 276.2 445.9 277.9 C444.5 279.5 436.6 279.3 435.0 277.9 C433.4 276.4 434.8 271.0 436.2 269.3Z" fill="#f2efe9" />
<path d="M484.9 214.6 C485.1 211.4 489.6 211.6 492.2 212.2 C494.7 212.8 498.6 214.6 499.9 218.2 C501.2 221.9 501.4 231.8 499.9 234.1 C498.4 236.3 493.4 234.9 490.9 231.6 C488.4 228.4 484.6 217.8 484.9 214.6Z" fill="#dcebd3" />
<path d="M483.6 248.7 C486.1 246.8 497.2 244.6 499.9 246.2 C502.7 247.9 502.5 256.6 499.9 258.4 C497.4 260.2 487.6 258.8 484.9 257.2 C482.1 255.6 481.1 250.5 483.6 248.7Z" fill="#d3e7c6" />
<path d="M336.4 231.6 C339.3 229.4 349.4 226.8 352.2 226.8 C355.1 226.8 355.3 229.4 353.5 231.6 C351.6 233.9 344.3 238.7 341.3 240.1 C338.3 241.6 336.0 241.6 335.2 240.1 C334.4 238.7 333.6 233.9 336.4 231.6Z" fill="#f2efe9" />
<path d="M402.1 253.5 C402.7 249.5 406.0 249.5 407.0 253.5 C408.0 257.6 408.8 273.8 408.2 277.9 C407.6 281.9 404.4 281.9 403.3 277.9 C402.3 273.8 401.5 257.6 402.1 253.5Z" fill="#e4ece0" />
<path d="M390.0 202.4 C391.6 200.2 397.3 198.4 402.1 197.6 C407.0 196.8 416.3 195.9 419.2 197.6 C422.0 199.2 421.2 205.5 419.2 207.3 C417.1 209.1 411.5 207.9 407.0 208.5 C402.5 209.1 395.2 212.0 392.4 210.9 C389.6 209.9 388.3 204.7 390.0 202.4Z" fill="#dcebd3" />
<path d="M402.1 202.4 C402.9 201.2 409.0 200.4 411.9 201.2 C414.7 202.0 420.0 206.1 419.2 207.3 C418.3 208.5 409.8 209.3 407.0 208.5 C404.2 207.7 401.3 203.6 402.1 202.4Z" fill="#dddcdc" />
<path d="M380.2 228.0 C380.6 226.0 383.9 226.0 385.1 228.0 C386.3 230.0 387.9 238.1 387.5 240.1 C387.1 242.2 383.9 242.2 382.7 240.1 C381.4 238.1 379.8 230.0 380.2 228.0Z" fill="#dddcdc" />
<path d="M382.7 265.7 C383.5 264.9 386.7 264.9 387.5 265.7 C388.3 266.5 388.3 269.7 387.5 270.6 C386.7 271.4 383.5 271.4 382.7 270.6 C381.9 269.7 381.9 266.5 382.7 265.7Z" fill="#dddcdc" />
<path d="M441.1 197.6 C443.1 196.4 461.3 195.1 467.8 197.6 C474.3 200.0 480.0 209.9 480.0 212.2 C480.0 214.4 471.9 212.2 467.8 210.9 C463.8 209.7 460.1 207.1 455.7 204.9 C451.2 202.6 439.0 198.8 441.1 197.6Z" fill="#d3e7c6" />
<path d="M227.8 15.8 C229.4 17.6 235.7 21.3 237.6 26.8 C239.4 32.2 237.6 42.6 238.8 48.7 C240.0 54.7 242.4 56.6 244.9 63.3 C247.3 70.0 253.6 83.1 253.4 88.8 C253.2 94.5 247.5 95.3 243.6 97.3 C239.8 99.4 232.5 100.4 230.3 101.0" fill="none" stroke="#bdb9b9" stroke-width="0.7" stroke-linecap="round" stroke-linejoin="round" />
<path d="M227.8 15.8 C224.4 17.8 213.2 22.9 207.1 28.0 C201.1 33.0 196.8 40.8 191.3 46.2 C185.9 51.7 178.4 56.0 174.3 60.8 C170.2 65.7 168.2 73.0 167.0 75.4" fill="none" stroke="#bdb9b9" stroke-width="0.7" stroke-linecap="round" stroke-linejoin="round" />
<path d="M297.2 0.0 C297.6 2.0 297.2 8.1 299.6 12.2 C302.0 16.2 312.4 19.7 311.8 24.3 C311.2 29.0 298.2 36.1 296.0 40.1 C293.7 44.2 295.5 46.8 298.4 48.7 C301.2 50.5 308.5 48.7 313.0 51.1 C317.4 53.5 321.6 58.8 325.2 63.3 C328.7 67.7 332.6 75.4 334.0 77.9" fill="none" stroke="#bdb9b9" stroke-width="0.7" stroke-linecap="round" stroke-linejoin="round" />
<path d="M210.8 138.3 C216.1 137.8 234.3 135.0 242.4 135.3 C250.5 135.6 256.6 139.3 259.5 140.1" fill="none" stroke="#bdb9b9" stroke-width="0.7" stroke-linecap="round" stroke-linejoin="round" />
<path d="M261.9 146.2 C262.1 149.9 261.3 162.9 263.1 168.1 C264.9 173.4 268.6 175.0 272.8 177.9 C277.1 180.7 282.4 181.3 288.7 185.2 C294.9 189.0 306.9 198.3 310.6 201.0" fill="none" stroke="#bdb9b9" stroke-width="0.7" stroke-linecap="round" stroke-linejoin="round" />
<path d="M334.0 100.0 C333.0 101.6 331.1 106.7 327.6 109.7 C324.1 112.8 316.4 114.2 313.0 118.2 C309.5 122.3 307.9 131.4 306.9 134.1" fill="none" stroke="#bdb9b9" stroke-width="0.7" stroke-linecap="round" stroke-linejoin="round" />
<path d="M334.0 73.0 C336.4 71.8 341.9 66.1 348.6 65.7 C355.3 65.3 367.7 67.5 374.1 70.6 C380.6 73.6 382.9 83.3 387.5 83.9 C392.2 84.5 399.7 75.8 402.1 74.2" fill="none" stroke="#bdb9b9" stroke-width="0.7" stroke-linecap="round" stroke-linejoin="round" />
<path d="M469.0 0.0 C466.8 2.0 457.5 8.5 455.7 12.2 C453.8 15.8 454.4 15.8 458.1 21.9 C461.7 28.0 473.3 38.1 477.6 48.7 C481.8 59.2 479.9 78.1 483.6 85.2 C487.4 92.3 497.2 90.2 499.9 91.2" fill="none" stroke="#bdb9b9" stroke-width="0.7" stroke-linecap="round" stroke-linejoin="round" />
<path d="M23.1 0.0 C28.6 3.0 46.4 17.0 56.0 18.2 C65.5 19.5 71.4 3.6 80.3 7.3 C89.2 10.9 101.8 34.1 109.5 40.1 C117.2 46.2 120.4 41.0 126.5 43.8 C132.6 46.6 139.2 56.8 146.0 57.2 C152.7 57.6 163.5 48.1 167.0 46.2" fill="none" stroke="#bdb9b9" stroke-width="0.7" stroke-linecap="round" stroke-linejoin="round" />
<path d="M83.9 7.3 C86.2 15.8 95.3 47.0 97.3 58.4 C99.4 69.7 94.9 68.5 96.1 75.4 C97.3 82.4 103.2 95.9 104.6 100.0" fill="none" stroke="#bdb9b9" stroke-width="0.7" stroke-linecap="round" stroke-linejoin="round" />
<path d="M0.0 156.0 C4.3 153.3 20.7 147.0 25.5 140.1 C30.4 133.3 29.8 118.7 29.2 114.6 C28.6 110.5 23.1 115.6 21.9 115.8" fill="none" stroke="#bdb9b9" stroke-width="0.7" stroke-linecap="round" stroke-linejoin="round" />
<path d="M40.1 100.0 C41.4 104.7 42.8 121.3 47.4 128.0 C52.1 134.7 61.0 134.3 68.1 140.1 C75.2 146.0 86.0 155.8 90.0 163.3 C94.1 170.8 92.1 181.5 92.5 185.2" fill="none" stroke="#bdb9b9" stroke-width="0.7" stroke-linecap="round" stroke-linejoin="round" />
<path d="M25.5 146.2 C30.0 149.3 46.0 164.5 52.3 164.5 C58.6 164.5 61.4 149.3 63.3 146.2" fill="none" stroke="#bdb9b9" stroke-width="0.7" stroke-linecap="round" stroke-linejoin="round" />
<path d="M90.0 163.3 C92.1 160.8 96.3 154.5 102.2 148.7 C108.1 142.8 118.0 134.3 125.3 128.0 C132.6 121.7 142.5 113.8 146.0 110.9" fill="none" stroke="#bdb9b9" stroke-width="0.7" stroke-linecap="round" stroke-linejoin="round" />
<path d="M104.6 100.0 C108.3 104.5 118.8 115.0 126.5 126.8 C134.2 138.5 146.8 158.4 150.9 170.6 C154.9 182.8 150.9 195.1 150.9 200.0" fill="none" stroke="#bdb9b9" stroke-width="0.7" stroke-linecap="round" stroke-linejoin="round" />
<path d="M0.0 203.6 C3.0 205.3 10.1 211.4 18.2 213.4 C26.4 215.4 43.6 213.6 48.7 215.8 C53.7 218.0 51.5 223.7 48.7 226.8 C45.8 229.8 35.3 228.4 31.6 234.1 C28.0 239.7 27.6 256.4 26.8 260.8" fill="none" stroke="#bdb9b9" stroke-width="0.7" stroke-linecap="round" stroke-linejoin="round" />
<path d="M94.9 200.0 C92.5 204.1 83.1 217.4 80.3 224.3 C77.5 231.2 79.9 238.1 77.9 241.4 C75.8 244.6 69.7 241.8 68.1 243.8 C66.5 245.8 66.5 248.7 68.1 253.5 C69.7 258.4 77.9 267.7 77.9 273.0 C77.9 278.3 70.6 280.7 68.1 285.2 C65.7 289.7 64.1 297.5 63.3 300.0" fill="none" stroke="#bdb9b9" stroke-width="0.7" stroke-linecap="round" stroke-linejoin="round" />
<path d="M80.3 300.0 C81.5 295.5 83.5 280.1 87.6 273.0 C91.6 265.9 97.1 259.8 104.6 257.2 C112.1 254.5 127.9 257.2 132.6 257.2" fill="none" stroke="#bdb9b9" stroke-width="0.7" stroke-linecap="round" stroke-linejoin="round" />
<path d="M109.5 226.8 C111.5 227.8 115.6 233.9 121.7 232.8 C127.7 231.8 138.4 224.3 146.0 220.7 C153.5 217.0 163.5 212.6 167.0 210.9" fill="none" stroke="#bdb9b9" stroke-width="0.7" stroke-linecap="round" stroke-linejoin="round" />
<path d="M167.0 218.2 C169.4 221.7 173.9 231.6 181.6 238.9 C189.3 246.2 206.7 254.3 213.2 262.0 C219.7 269.7 219.3 278.8 220.5 285.2 C221.7 291.5 220.5 297.5 220.5 300.0" fill="none" stroke="#bdb9b9" stroke-width="0.8" stroke-linecap="round" stroke-linejoin="round" />
<path d="M261.9 246.2 C262.5 248.1 265.5 253.5 265.5 257.2 C265.5 260.8 263.7 265.5 261.9 268.1 C260.1 270.8 255.8 267.7 254.6 273.0 C253.4 278.3 254.6 295.5 254.6 300.0" fill="none" stroke="#bdb9b9" stroke-width="0.7" stroke-linecap="round" stroke-linejoin="round" />
<path d="M300.8 202.4 C302.8 203.9 307.5 209.3 313.0 210.9 C318.5 212.6 330.5 212.0 334.0 212.2" fill="none" stroke="#bdb9b9" stroke-width="0.7" stroke-linecap="round" stroke-linejoin="round" />
<path d="M413.1 277.9 C413.3 275.0 411.7 265.9 414.3 260.8 C416.9 255.8 424.8 250.1 428.9 247.4 C432.9 244.8 437.0 245.4 438.6 245.0" fill="none" stroke="#bdb9b9" stroke-width="0.7" stroke-linecap="round" stroke-linejoin="round" />
<path d="M424.0 100.0 C424.4 102.0 424.0 108.5 426.5 112.2 C428.9 115.8 436.6 120.3 438.6 121.9" fill="none" stroke="#bdb9b9" stroke-width="1.0" stroke-linecap="round" stroke-linejoin="round" />
<path d="M65.7 0.0 C67.7 1.2 75.4 4.3 77.9 7.3 C80.3 10.3 77.9 14.6 80.3 18.2 C82.7 21.9 88.0 25.3 92.5 29.2 C96.9 33.0 104.2 38.3 107.1 41.4 C109.9 44.4 107.5 45.6 109.5 47.4 C111.5 49.3 117.2 49.7 119.2 52.3 C121.2 54.9 120.2 60.6 121.7 63.3 C123.1 65.9 126.3 65.7 127.7 68.1 C129.2 70.6 127.7 74.8 130.2 77.9 C132.6 80.9 141.3 83.5 142.3 86.4 C143.3 89.2 137.3 93.5 136.3 94.9" fill="none" stroke="#aad3df" stroke-width="1.1" stroke-linecap="round" stroke-linejoin="round" />
<path d="M92.5 129.2 C92.9 130.8 93.3 136.5 94.9 138.9 C96.5 141.4 100.8 141.8 102.2 143.8 C103.6 145.8 101.4 148.3 103.4 151.1 C105.4 153.9 112.3 158.0 114.4 160.8 C116.4 163.7 113.5 165.7 115.6 168.1 C117.6 170.6 125.1 172.6 126.5 175.4 C127.9 178.3 123.3 182.9 124.1 185.2 C124.9 187.4 129.8 186.3 131.4 188.8 C133.0 191.3 131.4 197.5 133.8 200.0 C136.3 202.5 140.5 202.0 146.0 203.6 C151.5 205.3 163.3 205.9 167.0 209.7 C170.7 213.6 166.2 222.3 168.2 226.8 C170.2 231.2 174.9 232.4 179.2 236.5 C183.4 240.6 188.1 246.6 193.8 251.1 C199.4 255.6 209.2 259.6 213.2 263.3 C217.3 266.9 215.7 271.0 218.1 273.0 C220.5 275.0 223.8 275.4 227.8 275.4 C231.9 275.4 236.3 272.6 242.4 273.0 C248.5 273.4 258.6 277.5 264.3 277.9 C270.0 278.3 270.4 277.7 276.5 275.4 C282.6 273.2 291.2 267.5 300.8 264.5 C310.4 261.4 328.5 258.4 334.0 257.2" fill="none" stroke="#aad3df" stroke-width="1.0" stroke-linecap="round" stroke-linejoin="round" />
<path d="M0.0 236.5 C0.4 238.5 1.8 244.2 2.4 248.7 C3.0 253.1 1.8 261.0 3.6 263.3 C5.5 265.5 10.7 261.0 13.4 262.0 C16.0 263.1 16.4 268.3 19.5 269.3 C22.5 270.4 27.2 267.9 31.6 268.1 C36.1 268.3 43.4 269.7 46.2 270.6 C49.1 271.4 50.5 271.8 48.7 273.0 C46.8 274.2 37.7 275.8 35.3 277.9 C32.8 279.9 33.0 282.3 34.1 285.2 C35.1 288.0 39.3 292.4 41.4 294.9 C43.4 297.4 45.4 299.1 46.2 300.0" fill="none" stroke="#aad3df" stroke-width="1.0" stroke-linecap="round" stroke-linejoin="round" />
<path d="M201.1 0.0 C199.4 2.0 192.3 8.9 191.3 12.2 C190.3 15.4 195.4 15.0 195.0 19.5 C194.6 23.9 188.5 34.1 188.9 38.9 C189.3 43.8 197.2 45.6 197.4 48.7 C197.6 51.7 191.1 54.3 190.1 57.2 C189.1 60.0 190.3 63.9 191.3 65.7 C192.3 67.5 196.6 66.9 196.2 68.1 C195.8 69.3 189.9 70.2 188.9 73.0 C187.9 75.8 189.9 80.7 190.1 85.2 C190.3 89.7 187.9 96.5 190.1 100.0 C192.3 103.5 197.8 105.9 203.5 106.1 C209.2 106.3 220.5 100.2 224.2 101.2 C227.8 102.2 223.6 109.7 225.4 112.2 C227.2 114.6 231.9 114.2 235.1 115.8 C238.4 117.4 241.6 119.3 244.9 121.9 C248.1 124.5 252.2 128.4 254.6 131.6 C257.0 134.9 255.8 139.5 259.5 141.4 C263.1 143.2 272.0 142.8 276.5 142.6 C280.9 142.4 282.2 141.4 286.2 140.1 C290.3 138.9 296.4 135.7 300.8 135.3 C305.3 134.9 309.1 135.7 313.0 137.7 C316.8 139.7 320.4 146.2 323.9 147.4 C327.4 148.7 330.3 145.4 334.0 145.0 C337.7 144.6 343.5 144.0 346.2 145.0 C348.8 146.0 347.0 149.9 349.8 151.1 C352.7 152.3 360.0 150.7 363.2 152.3 C366.4 153.9 368.3 158.0 369.3 160.8 C370.3 163.7 370.5 167.5 369.3 169.3 C368.1 171.2 363.0 170.0 362.0 171.8 C361.0 173.6 361.6 179.1 363.2 180.3 C364.8 181.5 370.3 179.3 371.7 179.1" fill="none" stroke="#aad3df" stroke-width="1.2" stroke-linecap="round" stroke-linejoin="round" />
<path d="M201.1 0.0 C199.4 2.0 192.3 8.9 191.3 12.2 C190.3 15.4 195.4 15.0 195.0 19.5 C194.6 23.9 188.5 34.1 188.9 38.9 C189.3 43.8 197.2 45.6 197.4 48.7 C197.6 51.7 191.1 54.3 190.1 57.2 C189.1 60.0 190.3 63.9 191.3 65.7 C192.3 67.5 196.6 66.9 196.2 68.1 C195.8 69.3 189.9 70.2 188.9 73.0 C187.9 75.8 189.9 80.7 190.1 85.2 C190.3 89.7 187.9 96.5 190.1 100.0 C192.3 103.5 197.8 105.9 203.5 106.1 C209.2 106.3 220.5 100.2 224.2 101.2 C227.8 102.2 223.6 109.7 225.4 112.2 C227.2 114.6 231.9 114.2 235.1 115.8 C238.4 117.4 241.6 119.3 244.9 121.9 C248.1 124.5 252.2 128.4 254.6 131.6 C257.0 134.9 255.8 139.5 259.5 141.4 C263.1 143.2 272.0 142.8 276.5 142.6 C280.9 142.4 282.2 141.4 286.2 140.1 C290.3 138.9 296.4 135.7 300.8 135.3 C305.3 134.9 309.1 135.7 313.0 137.7 C316.8 139.7 320.4 146.2 323.9 147.4 C327.4 148.7 330.3 145.4 334.0 145.0 C337.7 144.6 343.5 144.0 346.2 145.0 C348.8 146.0 347.0 149.9 349.8 151.1 C352.7 152.3 360.0 150.7 363.2 152.3 C366.4 153.9 368.3 158.0 369.3 160.8 C370.3 163.7 370.5 167.5 369.3 169.3 C368.1 171.2 363.0 170.0 362.0 171.8 C361.0 173.6 361.6 179.1 363.2 180.3 C364.8 181.5 370.3 179.3 371.7 179.1" fill="none" stroke="#8a86c8" stroke-width="1.0" stroke-linecap="round" stroke-linejoin="round" stroke-dasharray="2.5 1.2" opacity=".75"/>
<path d="M82.7 100.0 C82.9 103.6 82.3 117.0 83.9 121.9 C85.6 126.8 91.0 128.0 92.5 129.2" fill="none" stroke="#aad3df" stroke-width="1.2" stroke-linecap="round" stroke-linejoin="round" />
<path d="M82.7 100.0 C82.9 103.6 82.3 117.0 83.9 121.9 C85.6 126.8 91.0 128.0 92.5 129.2" fill="none" stroke="#8a86c8" stroke-width="1.0" stroke-linecap="round" stroke-linejoin="round" stroke-dasharray="2.5 1.2" opacity=".75"/>
<path d="M167.0 148.7 C167.4 150.3 167.8 156.4 169.4 158.4 C171.1 160.4 175.9 158.4 176.7 160.8 C177.5 163.3 175.9 169.3 174.3 173.0 C172.7 176.6 167.8 179.5 167.0 182.7 C166.2 186.0 169.4 189.6 169.4 192.5 C169.4 195.3 167.4 198.7 167.0 200.0" fill="none" stroke="#aad3df" stroke-width="1.2" stroke-linecap="round" stroke-linejoin="round" />
<path d="M167.0 148.7 C167.4 150.3 167.8 156.4 169.4 158.4 C171.1 160.4 175.9 158.4 176.7 160.8 C177.5 163.3 175.9 169.3 174.3 173.0 C172.7 176.6 167.8 179.5 167.0 182.7 C166.2 186.0 169.4 189.6 169.4 192.5 C169.4 195.3 167.4 198.7 167.0 200.0" fill="none" stroke="#8a86c8" stroke-width="1.0" stroke-linecap="round" stroke-linejoin="round" stroke-dasharray="2.5 1.2" opacity=".75"/>
<path d="M499.9 113.4 C497.6 112.2 490.8 108.3 486.1 106.1 C481.3 103.9 475.5 102.5 471.5 100.0 C467.4 97.5 466.4 94.7 461.7 91.2 C457.1 87.8 449.0 82.3 443.5 79.1 C438.0 75.8 432.9 74.2 428.9 71.8 C424.8 69.3 422.8 66.7 419.2 64.5 C415.5 62.2 410.6 59.4 407.0 58.4 C403.3 57.4 399.5 57.8 397.3 58.4 C395.0 59.0 393.6 60.2 393.6 62.0 C393.6 63.9 395.0 67.3 397.3 69.3 C399.5 71.4 403.7 72.8 407.0 74.2 C410.2 75.6 414.3 76.0 416.7 77.9 C419.2 79.7 421.2 81.5 421.6 85.2 C422.0 88.8 420.8 93.5 419.2 100.0 C417.5 106.5 413.3 116.2 411.9 124.3 C410.4 132.4 411.1 141.4 410.6 148.7 C410.1 156.0 408.6 162.9 408.8 168.1 C409.0 173.4 410.1 176.8 411.9 180.3 C413.6 183.7 416.1 186.2 419.2 188.8 C422.2 191.4 426.7 194.2 430.1 196.1 C433.6 198.0 434.4 198.3 439.8 200.0 C445.3 201.7 457.1 203.6 463.0 206.1 C468.8 208.5 472.1 211.2 475.1 214.6 C478.2 218.0 479.8 222.5 481.2 226.8 C482.6 231.0 483.4 235.7 483.6 240.1 C483.8 244.6 483.4 249.9 482.4 253.5 C481.4 257.2 480.0 260.0 477.6 262.0 C475.1 264.1 471.5 265.7 467.8 265.7 C464.2 265.7 459.1 263.9 455.7 262.0 C452.2 260.2 449.4 257.8 447.1 254.7 C444.9 251.7 443.5 247.6 442.3 243.8 C441.1 239.9 441.1 235.9 439.8 231.6 C438.6 227.4 437.2 222.3 435.0 218.2 C432.7 214.2 429.9 210.3 426.5 207.3 C423.0 204.3 417.5 202.3 414.3 200.0 C411.0 197.7 409.8 194.5 407.0 193.7 C404.2 192.8 399.7 193.8 397.3 194.9 C394.8 195.9 394.2 197.1 392.4 200.0 C390.6 202.9 387.1 207.7 386.3 212.2 C385.5 216.6 386.5 221.9 387.5 226.8 C388.5 231.6 390.8 236.9 392.4 241.4 C394.0 245.8 396.2 249.1 397.3 253.5 C398.3 258.0 398.9 264.1 398.5 268.1 C398.1 272.2 395.6 272.4 394.8 277.9 C394.0 283.3 393.8 297.1 393.6 301.0" fill="none" stroke="#d5e6d8" stroke-width="5.4" stroke-linecap="round" stroke-linejoin="round" />
<path d="M499.9 113.4 C497.6 112.2 490.8 108.3 486.1 106.1 C481.3 103.9 475.5 102.5 471.5 100.0 C467.4 97.5 466.4 94.7 461.7 91.2 C457.1 87.8 449.0 82.3 443.5 79.1 C438.0 75.8 432.9 74.2 428.9 71.8 C424.8 69.3 422.8 66.7 419.2 64.5 C415.5 62.2 410.6 59.4 407.0 58.4 C403.3 57.4 399.5 57.8 397.3 58.4 C395.0 59.0 393.6 60.2 393.6 62.0 C393.6 63.9 395.0 67.3 397.3 69.3 C399.5 71.4 403.7 72.8 407.0 74.2 C410.2 75.6 414.3 76.0 416.7 77.9 C419.2 79.7 421.2 81.5 421.6 85.2 C422.0 88.8 420.8 93.5 419.2 100.0 C417.5 106.5 413.3 116.2 411.9 124.3 C410.4 132.4 411.1 141.4 410.6 148.7 C410.1 156.0 408.6 162.9 408.8 168.1 C409.0 173.4 410.1 176.8 411.9 180.3 C413.6 183.7 416.1 186.2 419.2 188.8 C422.2 191.4 426.7 194.2 430.1 196.1 C433.6 198.0 434.4 198.3 439.8 200.0 C445.3 201.7 457.1 203.6 463.0 206.1 C468.8 208.5 472.1 211.2 475.1 214.6 C478.2 218.0 479.8 222.5 481.2 226.8 C482.6 231.0 483.4 235.7 483.6 240.1 C483.8 244.6 483.4 249.9 482.4 253.5 C481.4 257.2 480.0 260.0 477.6 262.0 C475.1 264.1 471.5 265.7 467.8 265.7 C464.2 265.7 459.1 263.9 455.7 262.0 C452.2 260.2 449.4 257.8 447.1 254.7 C444.9 251.7 443.5 247.6 442.3 243.8 C441.1 239.9 441.1 235.9 439.8 231.6 C438.6 227.4 437.2 222.3 435.0 218.2 C432.7 214.2 429.9 210.3 426.5 207.3 C423.0 204.3 417.5 202.3 414.3 200.0 C411.0 197.7 409.8 194.5 407.0 193.7 C404.2 192.8 399.7 193.8 397.3 194.9 C394.8 195.9 394.2 197.1 392.4 200.0 C390.6 202.9 387.1 207.7 386.3 212.2 C385.5 216.6 386.5 221.9 387.5 226.8 C388.5 231.6 390.8 236.9 392.4 241.4 C394.0 245.8 396.2 249.1 397.3 253.5 C398.3 258.0 398.9 264.1 398.5 268.1 C398.1 272.2 395.6 272.4 394.8 277.9 C394.0 283.3 393.8 297.1 393.6 301.0" fill="none" stroke="#aad3df" stroke-width="3.8" stroke-linecap="round" stroke-linejoin="round" />
<path d="M499.9 113.4 C497.6 112.2 490.8 108.3 486.1 106.1 C481.3 103.9 475.5 102.5 471.5 100.0 C467.4 97.5 466.4 94.7 461.7 91.2 C457.1 87.8 449.0 82.3 443.5 79.1 C438.0 75.8 432.9 74.2 428.9 71.8 C424.8 69.3 422.8 66.7 419.2 64.5 C415.5 62.2 410.6 59.4 407.0 58.4 C403.3 57.4 399.5 57.8 397.3 58.4 C395.0 59.0 393.6 60.2 393.6 62.0 C393.6 63.9 395.0 67.3 397.3 69.3 C399.5 71.4 403.7 72.8 407.0 74.2 C410.2 75.6 414.3 76.0 416.7 77.9 C419.2 79.7 421.2 81.5 421.6 85.2 C422.0 88.8 420.8 93.5 419.2 100.0 C417.5 106.5 413.3 116.2 411.9 124.3 C410.4 132.4 411.1 141.4 410.6 148.7 C410.1 156.0 408.6 162.9 408.8 168.1 C409.0 173.4 410.1 176.8 411.9 180.3 C413.6 183.7 416.1 186.2 419.2 188.8 C422.2 191.4 426.7 194.2 430.1 196.1 C433.6 198.0 434.4 198.3 439.8 200.0 C445.3 201.7 457.1 203.6 463.0 206.1 C468.8 208.5 472.1 211.2 475.1 214.6 C478.2 218.0 479.8 222.5 481.2 226.8 C482.6 231.0 483.4 235.7 483.6 240.1 C483.8 244.6 483.4 249.9 482.4 253.5 C481.4 257.2 480.0 260.0 477.6 262.0 C475.1 264.1 471.5 265.7 467.8 265.7 C464.2 265.7 459.1 263.9 455.7 262.0 C452.2 260.2 449.4 257.8 447.1 254.7 C444.9 251.7 443.5 247.6 442.3 243.8 C441.1 239.9 441.1 235.9 439.8 231.6 C438.6 227.4 437.2 222.3 435.0 218.2 C432.7 214.2 429.9 210.3 426.5 207.3 C423.0 204.3 417.5 202.3 414.3 200.0 C411.0 197.7 409.8 194.5 407.0 193.7 C404.2 192.8 399.7 193.8 397.3 194.9 C394.8 195.9 394.2 197.1 392.4 200.0 C390.6 202.9 387.1 207.7 386.3 212.2 C385.5 216.6 386.5 221.9 387.5 226.8 C388.5 231.6 390.8 236.9 392.4 241.4 C394.0 245.8 396.2 249.1 397.3 253.5 C398.3 258.0 398.9 264.1 398.5 268.1 C398.1 272.2 395.6 272.4 394.8 277.9 C394.0 283.3 393.8 297.1 393.6 301.0" fill="none" stroke="#5a6cf0" stroke-width="0.6" stroke-linecap="round" stroke-linejoin="round" stroke-dasharray="2.5 4" opacity=".4"/>
<path d="M501.9 46.2 C501.2 47.6 498.2 51.1 497.6 54.7 C497.0 58.4 497.5 64.1 498.2 68.1 C498.9 72.2 501.3 77.3 501.9 79.1" fill="none" stroke="#f6c384" stroke-width="4.5" stroke-linecap="round" stroke-linejoin="round" />
<path d="M501.9 46.2 C501.2 47.6 498.2 51.1 497.6 54.7 C497.0 58.4 497.5 64.1 498.2 68.1 C498.9 72.2 501.3 77.3 501.9 79.1" fill="none" stroke="#aad3df" stroke-width="2.5" stroke-linecap="round" stroke-linejoin="round" />
<path d="M499.9 109.7 C496.6 108.1 485.3 102.9 480.0 100.0 C474.6 97.1 471.9 94.9 467.8 92.5 C463.8 90.0 459.7 88.0 455.7 85.2 C451.6 82.3 447.5 78.3 443.5 75.4 C439.4 72.6 435.4 70.8 431.3 68.1 C427.3 65.5 423.2 61.8 419.2 59.6 C415.1 57.4 410.6 55.6 407.0 54.7 C403.3 53.9 399.9 53.9 397.3 54.7 C394.6 55.6 392.0 57.4 391.2 59.6 C390.4 61.8 390.6 65.7 392.4 68.1 C394.2 70.6 398.7 72.6 402.1 74.2 C405.6 75.8 410.4 76.0 413.1 77.9 C415.7 79.7 417.5 81.5 417.9 85.2 C418.3 88.8 416.9 93.5 415.5 100.0 C414.1 106.5 410.6 116.2 409.4 124.3 C408.2 132.4 408.8 141.4 408.2 148.7 C407.6 156.0 405.6 162.4 405.8 168.1 C406.0 173.8 407.2 178.7 409.4 182.7 C411.7 186.8 415.5 189.6 419.2 192.5 C422.8 195.3 425.2 197.5 431.3 200.0 C437.4 202.5 449.6 204.7 455.7 207.3 C461.7 209.9 464.6 212.4 467.8 215.8 C471.1 219.3 473.5 223.9 475.1 228.0 C476.7 232.0 477.2 236.1 477.6 240.1 C477.9 244.2 476.1 249.3 476.9 252.3 C477.8 255.4 480.1 256.8 482.4 258.4 C484.8 260.0 488.0 261.8 490.9 262.0 C493.9 262.2 498.4 260.0 499.9 259.6" fill="none" stroke="#f6c384" stroke-width="1.9" stroke-linecap="round" stroke-linejoin="round" />
<path d="M399.7 280.3 C399.7 276.6 400.5 264.1 399.7 258.4 C398.9 252.7 396.0 250.9 394.8 246.2 C393.6 241.6 392.8 235.5 392.4 230.4 C392.0 225.3 391.2 219.3 392.4 215.8 C393.6 212.4 396.4 210.8 399.7 209.7 C402.9 208.6 407.8 208.3 411.9 209.1 C415.9 209.9 420.4 212.1 424.0 214.6 C427.7 217.1 431.3 220.3 433.8 224.3 C436.2 228.4 437.4 234.5 438.6 238.9 C439.8 243.4 439.2 247.4 441.1 251.1 C442.9 254.7 446.1 258.2 449.6 260.8 C453.0 263.5 457.7 266.0 461.7 266.9 C465.8 267.8 470.5 267.5 473.9 266.3 C477.3 265.1 481.0 260.7 482.4 259.6" fill="none" stroke="#f6c384" stroke-width="1.9" stroke-linecap="round" stroke-linejoin="round" />
<path d="M405.8 168.1 C404.0 169.3 398.3 174.2 394.8 175.4 C391.4 176.6 387.7 176.6 385.1 175.4 C382.5 174.2 380.6 170.2 379.0 168.1 C377.4 166.1 376.6 163.3 375.4 163.3 C374.1 163.3 372.3 167.3 371.7 168.1" fill="none" stroke="#f6c384" stroke-width="1.9" stroke-linecap="round" stroke-linejoin="round" />
<path d="M371.7 177.9 C372.1 179.1 373.9 181.5 374.1 185.2 C374.3 188.8 373.9 196.3 372.9 200.0 C371.9 203.7 368.1 205.3 368.1 207.3 C368.1 209.3 371.7 210.3 372.9 212.2 C374.1 214.0 375.8 216.6 375.4 218.2 C375.0 219.9 373.3 221.1 370.5 221.9 C367.7 222.7 362.4 221.7 358.3 223.1 C354.3 224.5 349.8 227.6 346.2 230.4 C342.5 233.3 338.5 237.5 336.4 240.1 C334.4 242.8 336.9 243.4 334.0 246.2 C331.1 249.1 323.6 254.7 319.1 257.2 C314.6 259.6 311.0 259.4 306.9 260.8 C302.8 262.2 299.8 263.5 294.7 265.7 C289.7 267.9 282.0 272.8 276.5 274.2 C271.0 275.6 265.5 274.8 261.9 274.2 C258.2 273.6 257.0 272.6 254.6 270.6 C252.2 268.5 250.5 264.7 247.3 262.0 C244.0 259.4 238.8 257.2 235.1 254.7 C231.5 252.3 228.0 249.1 225.4 247.4 C222.8 245.8 220.5 247.2 219.3 245.0 C218.1 242.8 219.1 237.3 218.1 234.1 C217.1 230.8 213.4 227.6 213.2 225.5 C213.0 223.5 216.9 222.5 216.9 221.9 C216.9 221.3 214.9 224.1 213.2 221.9 C211.6 219.7 207.8 212.2 207.1 208.5 C206.5 204.9 209.4 203.3 209.6 200.0 C209.8 196.7 210.0 193.3 208.4 188.8 C206.7 184.3 200.9 178.5 199.8 173.0 C198.8 167.5 200.7 160.2 202.3 156.0 C203.9 151.7 208.4 150.1 209.6 147.4 C210.8 144.8 210.4 142.2 209.6 140.1 C208.8 138.1 208.4 136.5 204.7 135.3 C201.1 134.1 190.9 135.1 187.7 132.8 C184.4 130.6 186.9 127.4 185.2 121.9 C183.6 116.4 179.8 106.1 177.9 100.0 C176.1 93.9 175.7 89.7 174.3 85.2 C172.9 80.7 170.0 79.1 169.4 73.0 C168.8 66.9 171.1 54.1 170.6 48.7 C170.2 43.2 167.7 43.0 167.0 40.1 C166.3 37.3 167.3 33.9 166.7 31.6 C166.0 29.4 165.5 29.2 163.0 26.8 C160.6 24.3 155.5 21.5 152.1 17.0 C148.6 12.6 144.0 2.8 142.3 0.0" fill="none" stroke="#f6c384" stroke-width="1.9" stroke-linecap="round" stroke-linejoin="round" />
<path d="M133.8 301.0 C135.0 300.0 138.3 296.3 141.1 294.9 C144.0 293.5 146.5 292.6 150.9 292.5 C155.2 292.4 163.1 294.7 167.0 294.3 C170.9 293.9 170.7 293.2 174.3 290.0 C177.9 286.9 186.1 278.7 188.9 275.4 C191.7 272.2 188.9 272.1 191.3 270.6 C193.8 269.0 199.4 267.3 203.5 266.3 C207.6 265.3 212.0 264.0 215.7 264.5 C219.3 265.0 221.3 268.4 225.4 269.3 C229.4 270.3 235.5 270.0 240.0 270.0 C244.5 270.0 249.7 269.2 252.2 269.3 C254.6 269.4 254.2 270.4 254.6 270.6" fill="none" stroke="#f6c384" stroke-width="1.9" stroke-linecap="round" stroke-linejoin="round" />
<path d="M445.3 0.0 C443.0 6.1 435.7 24.3 431.3 36.5 C427.0 48.7 420.4 65.1 419.2 73.0 C417.9 80.9 424.0 79.4 424.0 83.9 C424.0 88.4 420.8 93.3 419.2 100.0 C417.5 106.7 415.2 115.2 414.3 124.3 C413.4 133.5 413.3 147.0 413.7 154.7 C414.1 162.4 416.1 166.3 416.7 170.6 C417.3 174.8 418.1 177.5 417.3 180.3 C416.5 183.1 415.2 185.6 411.9 187.6 C408.5 189.6 401.3 190.4 397.3 192.5 C393.2 194.5 390.0 196.1 387.5 200.0 C385.1 203.9 384.7 212.0 382.7 215.8 C380.6 219.7 379.4 221.1 375.4 223.1 C371.3 225.1 363.2 225.1 358.3 228.0 C353.5 230.8 350.2 235.9 346.2 240.1 C342.1 244.4 337.5 250.1 334.0 253.5 C330.5 257.0 330.7 257.6 325.2 260.8 C319.6 264.1 309.3 269.1 300.8 273.0 C292.3 276.8 281.4 280.7 274.1 283.9 C266.8 287.2 263.5 290.6 257.0 292.5 C250.5 294.3 239.6 293.5 235.1 294.9 C230.7 296.3 231.1 300.0 230.3 301.0" fill="none" stroke="#6e6e6e" stroke-width="0.9" stroke-linecap="round" stroke-linejoin="round" />
<path d="M379.0 221.9 C379.6 224.3 380.4 231.2 382.7 236.5 C384.9 241.8 390.4 248.3 392.4 253.5 C394.4 258.8 394.8 263.7 394.8 268.1 C394.8 272.6 392.8 278.3 392.4 280.3" fill="none" stroke="#7a7a7a" stroke-width="0.8" stroke-linecap="round" stroke-linejoin="round" />
<path d="M13.4 -1.2 C12.4 1.0 8.7 7.5 7.3 12.2 C5.9 16.8 4.9 21.9 4.9 26.8 C4.9 31.6 5.5 36.3 7.3 41.4 C9.1 46.4 13.0 52.7 15.8 57.2 C18.7 61.6 21.9 63.5 24.3 68.1 C26.8 72.8 29.0 79.8 30.4 85.2 C31.8 90.5 32.0 94.5 32.8 100.0 C33.7 105.5 33.7 112.8 35.3 118.2 C36.9 123.7 39.3 129.0 42.6 132.8 C45.8 136.7 50.9 138.9 54.7 141.4 C58.6 143.8 62.4 145.4 65.7 147.4 C68.9 149.5 72.0 150.5 74.2 153.5 C76.4 156.6 77.5 161.6 79.1 165.7 C80.7 169.7 82.1 174.6 83.9 177.9 C85.8 181.1 88.0 182.7 90.0 185.2 C92.1 187.6 94.7 190.0 96.1 192.5 C97.5 194.9 98.5 197.1 98.5 200.0 C98.5 202.9 96.5 206.1 96.1 209.7 C95.7 213.4 94.9 218.2 96.1 221.9 C97.3 225.5 100.0 229.6 103.4 231.6 C106.9 233.7 112.9 232.8 116.8 234.1 C120.6 235.3 123.9 236.5 126.5 238.9 C129.2 241.4 131.7 245.4 132.6 248.7 C133.5 251.9 133.0 254.7 132.0 258.4 C131.0 262.0 128.4 266.1 126.5 270.6 C124.6 275.0 122.3 280.1 120.4 285.2 C118.6 290.2 116.4 298.3 115.6 301.0" fill="none" stroke="#e25880" stroke-width="2.5" stroke-linecap="round" stroke-linejoin="round" />
<path d="M13.4 -1.2 C12.4 1.0 8.7 7.5 7.3 12.2 C5.9 16.8 4.9 21.9 4.9 26.8 C4.9 31.6 5.5 36.3 7.3 41.4 C9.1 46.4 13.0 52.7 15.8 57.2 C18.7 61.6 21.9 63.5 24.3 68.1 C26.8 72.8 29.0 79.8 30.4 85.2 C31.8 90.5 32.0 94.5 32.8 100.0 C33.7 105.5 33.7 112.8 35.3 118.2 C36.9 123.7 39.3 129.0 42.6 132.8 C45.8 136.7 50.9 138.9 54.7 141.4 C58.6 143.8 62.4 145.4 65.7 147.4 C68.9 149.5 72.0 150.5 74.2 153.5 C76.4 156.6 77.5 161.6 79.1 165.7 C80.7 169.7 82.1 174.6 83.9 177.9 C85.8 181.1 88.0 182.7 90.0 185.2 C92.1 187.6 94.7 190.0 96.1 192.5 C97.5 194.9 98.5 197.1 98.5 200.0 C98.5 202.9 96.5 206.1 96.1 209.7 C95.7 213.4 94.9 218.2 96.1 221.9 C97.3 225.5 100.0 229.6 103.4 231.6 C106.9 233.7 112.9 232.8 116.8 234.1 C120.6 235.3 123.9 236.5 126.5 238.9 C129.2 241.4 131.7 245.4 132.6 248.7 C133.5 251.9 133.0 254.7 132.0 258.4 C131.0 262.0 128.4 266.1 126.5 270.6 C124.6 275.0 122.3 280.1 120.4 285.2 C118.6 290.2 116.4 298.3 115.6 301.0" fill="none" stroke="#e8708f" stroke-width="1.1" stroke-linecap="round" stroke-linejoin="round" />
<path d="M41.4 26.8 C41.2 30.4 38.1 43.8 40.1 48.7 C42.2 53.5 48.9 53.5 53.5 56.0 C58.2 58.4 64.1 60.4 68.1 63.3 C72.2 66.1 77.0 70.4 77.9 73.0 C78.7 75.6 73.0 76.6 73.0 79.1 C73.0 81.5 77.0 84.1 77.9 87.6 C78.7 91.1 77.9 97.9 77.9 100.0" fill="none" stroke="#9a7fa8" stroke-width="0.9" stroke-linecap="round" stroke-linejoin="round" stroke-dasharray="3 1.5 1 1.5" opacity=".6"/>
<path d="M129.0 102.4 C125.7 105.1 115.6 114.2 109.5 118.2 C103.4 122.3 96.5 125.8 92.5 126.8 C88.4 127.8 86.4 124.7 85.2 124.3" fill="none" stroke="#9a7fa8" stroke-width="0.9" stroke-linecap="round" stroke-linejoin="round" stroke-dasharray="3 1.5 1 1.5" opacity=".6"/>
<path d="M372.9 0.0 C372.3 2.0 369.1 7.5 369.3 12.2 C369.5 16.8 380.0 23.1 374.1 28.0 C368.3 32.8 340.7 39.1 334.0 41.4" fill="none" stroke="#9a7fa8" stroke-width="0.9" stroke-linecap="round" stroke-linejoin="round" stroke-dasharray="3 1.5 1 1.5" opacity=".6"/>
<path d="M334.0 73.0 C336.0 73.8 342.1 74.2 346.2 77.9 C350.2 81.5 352.2 91.6 358.3 94.9 C364.4 98.1 374.6 96.7 382.7 97.3 C390.8 97.9 402.9 98.3 407.0 98.5" fill="none" stroke="#9a7fa8" stroke-width="0.9" stroke-linecap="round" stroke-linejoin="round" stroke-dasharray="3 1.5 1 1.5" opacity=".6"/>
<path d="M402.1 68.1 C405.0 68.9 412.3 68.5 419.2 73.0 C426.1 77.5 439.4 91.2 443.5 94.9" fill="none" stroke="#9a7fa8" stroke-width="0.9" stroke-linecap="round" stroke-linejoin="round" stroke-dasharray="3 1.5 1 1.5" opacity=".6"/>
<path d="M352.2 100.0 C349.6 104.7 338.5 121.7 336.4 128.0 C334.4 134.3 338.1 135.1 340.1 137.7 C342.1 140.3 347.2 142.8 348.6 143.8" fill="none" stroke="#9a7fa8" stroke-width="0.9" stroke-linecap="round" stroke-linejoin="round" stroke-dasharray="3 1.5 1 1.5" opacity=".6"/>
<path d="M445.9 100.0 C451.0 105.7 471.7 127.0 476.3 134.1 C481.0 141.2 470.0 137.3 473.9 142.6 C477.8 147.9 495.6 161.8 499.9 165.7" fill="none" stroke="#9a7fa8" stroke-width="0.9" stroke-linecap="round" stroke-linejoin="round" stroke-dasharray="3 1.5 1 1.5" opacity=".6"/>
<path d="M35.3 249.9 C36.1 249.3 35.9 248.1 40.1 246.2 C44.4 244.4 55.2 242.4 60.8 238.9 C66.5 235.5 71.2 225.3 74.2 225.5 C77.3 225.8 78.5 235.1 79.1 240.1 C79.7 245.2 76.4 250.9 77.9 256.0 C79.3 261.0 85.4 266.9 87.6 270.6 C89.8 274.2 90.6 276.6 91.2 277.9" fill="none" stroke="#9a7fa8" stroke-width="0.9" stroke-linecap="round" stroke-linejoin="round" stroke-dasharray="3 1.5 1 1.5" opacity=".6"/>
<path d="M87.6 221.9 C88.4 223.5 92.9 228.2 92.5 231.6 C92.1 235.1 87.6 238.5 85.2 242.6 C82.7 246.6 79.1 253.7 77.9 256.0" fill="none" stroke="#9a7fa8" stroke-width="0.9" stroke-linecap="round" stroke-linejoin="round" stroke-dasharray="3 1.5 1 1.5" opacity=".6"/>
<path d="M104.6 200.0 C104.4 202.4 103.0 210.9 103.4 214.6 C103.8 218.2 108.5 220.5 107.1 221.9 C105.6 223.3 96.9 222.9 94.9 223.1" fill="none" stroke="#9a7fa8" stroke-width="0.9" stroke-linecap="round" stroke-linejoin="round" stroke-dasharray="3 1.5 1 1.5" opacity=".6"/>
<path d="M90.0 277.9 C91.2 276.4 94.7 268.5 97.3 269.3 C100.0 270.2 103.4 281.7 105.8 282.7 C108.3 283.7 108.5 277.0 111.9 275.4 C115.4 273.8 121.2 275.0 126.5 273.0 C131.8 271.0 139.3 266.7 143.6 263.3 C147.8 259.8 148.2 253.9 152.1 252.3 C156.0 250.7 164.5 253.3 167.0 253.5" fill="none" stroke="#9a7fa8" stroke-width="0.9" stroke-linecap="round" stroke-linejoin="round" stroke-dasharray="3 1.5 1 1.5" opacity=".6"/>
<path d="M32.8 263.3 C35.5 263.7 45.0 264.5 48.7 265.7 C52.3 266.9 53.7 269.7 54.7 270.6" fill="none" stroke="#9a7fa8" stroke-width="0.9" stroke-linecap="round" stroke-linejoin="round" stroke-dasharray="3 1.5 1 1.5" opacity=".6"/>
<path d="M12.2 300.0 C13.8 298.9 19.7 296.4 21.9 293.7 C24.1 291.0 24.5 287.0 25.5 283.9 C26.6 280.9 26.2 277.0 28.0 275.4 C29.8 273.8 35.1 274.4 36.5 274.2" fill="none" stroke="#9a7fa8" stroke-width="0.9" stroke-linecap="round" stroke-linejoin="round" stroke-dasharray="3 1.5 1 1.5" opacity=".6"/>
<path d="M167.0 253.5 C168.2 253.7 171.9 252.3 174.3 254.7 C176.7 257.2 177.7 264.1 181.6 268.1 C185.5 272.2 191.7 276.0 197.4 279.1 C203.1 282.1 210.2 285.0 215.7 286.4 C221.1 287.8 227.8 287.4 230.3 287.6" fill="none" stroke="#9a7fa8" stroke-width="0.9" stroke-linecap="round" stroke-linejoin="round" stroke-dasharray="3 1.5 1 1.5" opacity=".6"/>
<path d="M186.5 285.2 C188.1 285.8 194.8 286.8 196.2 288.8 C197.6 290.8 195.2 295.9 195.0 297.3" fill="none" stroke="#9a7fa8" stroke-width="0.9" stroke-linecap="round" stroke-linejoin="round" stroke-dasharray="3 1.5 1 1.5" opacity=".6"/>
<path d="M380.2 221.9 C383.1 223.1 393.4 226.2 397.3 229.2 C401.1 232.2 401.7 235.7 403.3 240.1 C405.0 244.6 405.6 251.3 407.0 256.0 C408.4 260.6 411.3 264.5 411.9 268.1 C412.5 271.8 410.8 276.2 410.6 277.9" fill="none" stroke="#9a7fa8" stroke-width="0.9" stroke-linecap="round" stroke-linejoin="round" stroke-dasharray="3 1.5 1 1.5" opacity=".6"/>
<path d="M171.9 73.0 C173.5 72.8 178.8 71.8 181.6 71.8 C184.4 71.8 187.7 72.8 188.9 73.0" fill="none" stroke="#9a7fa8" stroke-width="0.9" stroke-linecap="round" stroke-linejoin="round" stroke-dasharray="3 1.5 1 1.5" opacity=".6"/>
<path d="M334.0 41.4 C332.1 44.0 324.2 53.5 322.7 57.2 C321.2 60.8 323.3 60.6 325.2 63.3 C327.0 65.9 332.6 71.4 334.0 73.0" fill="none" stroke="#9a7fa8" stroke-width="0.9" stroke-linecap="round" stroke-linejoin="round" stroke-dasharray="3 1.5 1 1.5" opacity=".6"/>
<path d="M254.6 140.1 C256.2 141.0 260.7 144.6 264.3 145.0 C268.0 145.4 274.5 143.0 276.5 142.6" fill="none" stroke="#9a7fa8" stroke-width="0.9" stroke-linecap="round" stroke-linejoin="round" stroke-dasharray="3 1.5 1 1.5" opacity=".6"/>
<path d="M113.9 10.6 l3.6 6.2 h-7.2z" fill="#d08f55"/>
<path d="M113.9 46.5 l3.6 6.2 h-7.2z" fill="#d08f55"/>
<path d="M125.9 54.4 l3.6 6.2 h-7.2z" fill="#d08f55"/>
<path d="M14.8 57.4 l3.6 6.2 h-7.2z" fill="#d08f55"/>
<path d="M188.9 53.2 l3.6 6.2 h-7.2z" fill="#d08f55"/>
<path d="M321.9 46.2 l3.6 6.2 h-7.2z" fill="#d08f55"/>
<path d="M419.2 70.8 l3.6 6.2 h-7.2z" fill="#d08f55"/>
<path d="M486.1 10.0 l3.6 6.2 h-7.2z" fill="#d08f55"/>
<path d="M24.0 168.4 l3.6 6.2 h-7.2z" fill="#d08f55"/>
<path d="M38.9 176.3 l3.6 6.2 h-7.2z" fill="#d08f55"/>
<path d="M45.0 193.3 l3.6 6.2 h-7.2z" fill="#d08f55"/>
<path d="M101.0 162.3 l3.6 6.2 h-7.2z" fill="#d08f55"/>
<path d="M144.2 182.4 l3.6 6.2 h-7.2z" fill="#d08f55"/>
<path d="M250.9 102.4 l3.6 6.2 h-7.2z" fill="#d08f55"/>
<path d="M281.0 188.4 l3.6 6.2 h-7.2z" fill="#d08f55"/>
<path d="M392.0 150.7 l3.6 6.2 h-7.2z" fill="#d08f55"/>
<path d="M463.0 111.8 l3.6 6.2 h-7.2z" fill="#d08f55"/>
<path d="M84.8 217.3 l3.6 6.2 h-7.2z" fill="#d08f55"/>
<path d="M126.9 212.4 l3.6 6.2 h-7.2z" fill="#d08f55"/>
<path d="M69.0 235.5 l3.6 6.2 h-7.2z" fill="#d08f55"/>
<path d="M74.8 243.4 l3.6 6.2 h-7.2z" fill="#d08f55"/>
<path d="M138.9 235.5 l3.6 6.2 h-7.2z" fill="#d08f55"/>
<path d="M105.0 250.5 l3.6 6.2 h-7.2z" fill="#d08f55"/>
<path d="M147.0 250.5 l3.6 6.2 h-7.2z" fill="#d08f55"/>
<path d="M33.1 255.6 l3.6 6.2 h-7.2z" fill="#d08f55"/>
<path d="M132.0 267.5 l3.6 6.2 h-7.2z" fill="#d08f55"/>
<path d="M44.0 276.6 l3.6 6.2 h-7.2z" fill="#d08f55"/>
<path d="M21.9 283.6 l3.6 6.2 h-7.2z" fill="#d08f55"/>
<path d="M92.9 288.4 l3.6 6.2 h-7.2z" fill="#d08f55"/>
<path d="M68.9 295.7 l3.6 6.2 h-7.2z" fill="#d08f55"/>
<path d="M212.0 204.5 l3.6 6.2 h-7.2z" fill="#d08f55"/>
<path d="M268.0 225.6 l3.6 6.2 h-7.2z" fill="#d08f55"/>
<path d="M247.9 246.5 l3.6 6.2 h-7.2z" fill="#d08f55"/>
<path d="M182.2 265.3 l3.6 6.2 h-7.2z" fill="#d08f55"/>
<path d="M234.9 276.6 l3.6 6.2 h-7.2z" fill="#d08f55"/>
<path d="M489.1 205.7 l3.6 6.2 h-7.2z" fill="#d08f55"/>
<path d="M364.0 235.8 l3.6 6.2 h-7.2z" fill="#d08f55"/>
<path d="M372.9 255.8 l3.6 6.2 h-7.2z" fill="#d08f55"/>
<path d="M353.8 272.6 l3.6 6.2 h-7.2z" fill="#d08f55"/>
<path d="M268.8 132.6 l3.7 6.2 h-7.4z" fill="#d60000"/>
<path d="M192.9 186.7 l3.7 6.2 h-7.4z" fill="#d60000"/>
</svg>
<div class="abs shield" style="left:161.300px;top:102.300px;width:39.500px;height:17.200px">B 421</div>
<div class="abs rlab" style="left:16.800px;top:63.800px">122</div>
<div class="abs rlab" style="left:87.200px;top:185px">123</div>
<div class="abs" style="left:455.300px;top:227.200px;font-size:10.300px;letter-spacing:.55px;line-height:14px;color:#222;white-space:nowrap;text-shadow:0 0 1.500px #fff,0 0 1.500px #fff">Zell (Mosel)</div>
<svg class="abs" style="left:241px;top:127.700px" width="16" height="22" viewBox="0 0 16 22"><path d="M8 1.300a5.200 5.200 0 0 1 5.200 5.200c0 3.200-3.400 5.400-4.400 8.200L8 19.800l-.8-5.100C6.200 11.900 2.800 9.700 2.800 6.500A5.200 5.200 0 0 1 8 1.300z" fill="#6363fb" stroke="#000" stroke-width="1.500" stroke-linejoin="round"/></svg>
<div class="abs" style="left:8px;top:7.700px;width:26px;height:48.300px;background:rgba(255,255,255,.4);border-radius:4px"></div>
<div class="abs zbtn" style="left:10px;top:9.700px;height:22.300px;border-radius:2px 2px 0 0"><svg width="22" height="22" viewBox="0 0 22 22" style="display:block"><path d="M11.100 7.300v8.200M7 11.400h8.200" fill="none" stroke="#fff" stroke-width="1.900"/></svg></div>
<div class="abs zbtn" style="left:10px;top:33px;height:20.800px;border-radius:0 0 2px 2px"><svg width="22" height="21" viewBox="0 0 22 21" style="display:block"><path d="M7.400 10.900h8.200" fill="none" stroke="#fff" stroke-width="2.100"/></svg></div>
<div class="abs" style="left:465.500px;top:7.500px;width:27.500px;height:27.500px;background:rgba(255,255,255,.4);border-radius:4px"></div>
<div class="abs zbtn" style="left:468.200px;top:10px;width:21.800px;border-radius:2px"><svg width="22" height="22" viewBox="0 0 22 22" style="display:block"><path d="M7.800 14.800L14.300 8.200" fill="none" stroke="#fff" stroke-width="1.700"/><path d="M15.400 7.200L10.900 7.500L15.100 11.700zM6.800 15.800L11.300 15.600L7 11.400z" fill="#fff"/></svg></div>
<div class="abs" style="left:275.400px;top:276.100px;width:225px;height:24px;background:rgba(255,255,255,.82);font-size:14.500px;line-height:25px;padding-left:9px;color:#111;white-space:nowrap">© <span style="color:#4a6285">OpenStreetMap</span> contributors.</div>
</div><!--/map-->
<div class="abs" style="left:400px;top:531px;font-size:11.5px;letter-spacing:.07px;line-height:14px;color:#888">© <span style="color:#4a6285">OpenStreetMap</span> contributors, <span style="color:#4a6285">CC-BY-SA</span></div>
<div class="abs hint" style="left:400px;top:549px;letter-spacing:-.1px">Click map to set location.</div>

<div class="abs lbl" style="top:590px">Width <span class="red">*</span></div>
<div class="abs inp" style="left:400px;top:585px;width:56px;text-align:right;padding-right:7px">400</div>
<div class="abs lbl" style="top:635px">Height in pixels <span class="red">*</span></div>
<div class="abs inp" style="left:400px;top:630px;width:56px;text-align:right;padding-right:7px">200</div>
<div class="abs lbl" style="top:680px">Alignment</div>
<div class="abs inp sel" style="left:400px;top:675px;width:115px">Left<svg class="chev" width="10" height="7" viewBox="0 0 10 7"><path d="M1 1l4 4.200 4-4.200" fill="none" stroke="#222" stroke-width="1.500"/></svg></div>
<div class="abs lbl" style="top:724px">Caption</div>
<div class="abs inp" style="left:400px;top:719px;width:1081px;height:42px"><svg style="position:absolute;right:1px;bottom:1px" width="10" height="10" viewBox="0 0 10 10"><path d="M.3 9.700L9.700.3M3.300 9.700L9.700 3.300M6.300 9.700L9.700 6.300M9 9.600l.6-.6" fill="none" stroke="#777" stroke-width="1"/></svg></div>

<div class="abs" style="left:30px;top:776px;font-size:13px;letter-spacing:.3px;line-height:18px"><span class="red">*</span> Required</div>
<div class="abs btn" style="left:1372px;top:774px;line-height:28px">Save</div>
<div class="abs btn" style="left:1436px;top:774px;line-height:28px">Cancel</div>
</body></html>
